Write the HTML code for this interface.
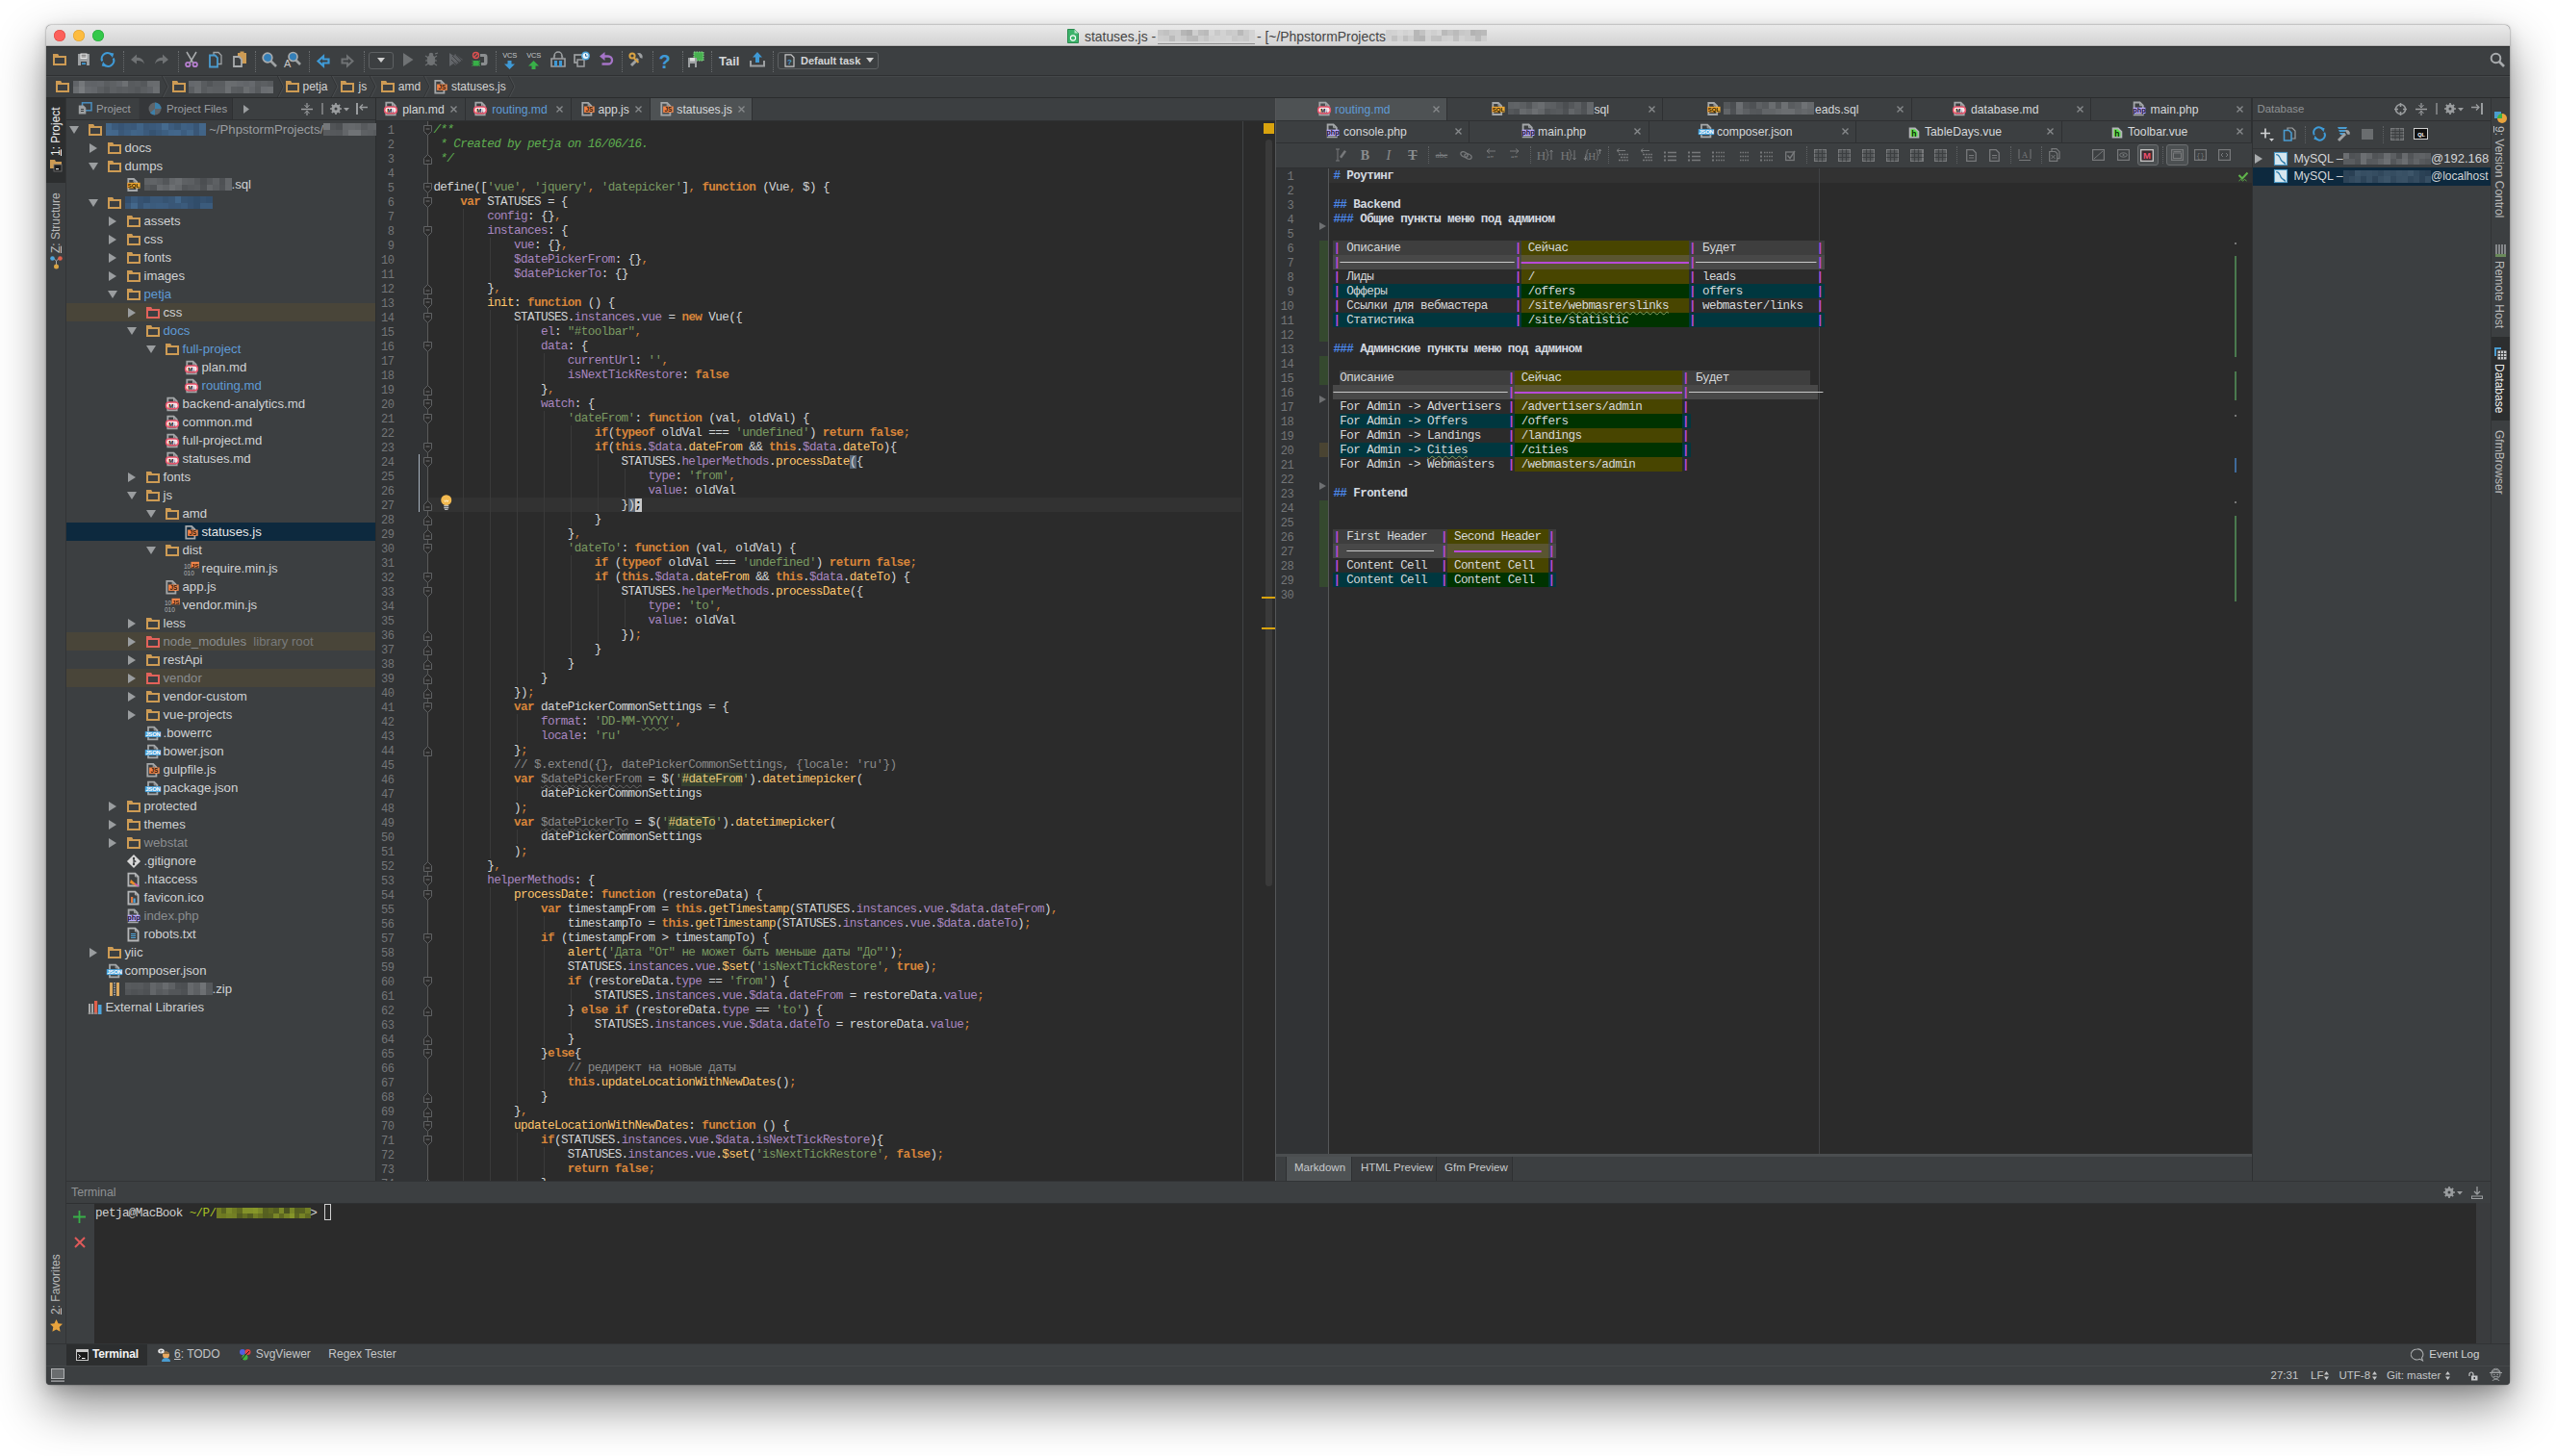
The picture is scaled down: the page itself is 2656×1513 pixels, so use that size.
<!DOCTYPE html><html><head><meta charset="utf-8"><title>statuses.js</title><style>
html,body{margin:0;padding:0;background:#fff}
body{width:2656px;height:1513px;position:relative;overflow:hidden;font-family:"Liberation Sans",sans-serif}
#win{position:absolute;left:48px;top:25.5px;width:2560px;height:1413px;background:#3c3f41;border-radius:5px 5px 4px 4px;overflow:hidden}
#sh{position:absolute;left:48px;top:25.5px;width:2560px;height:1413px;border-radius:5px;box-shadow:0 22px 50px 1px rgba(0,0,0,.44),0 0 2px rgba(0,0,0,.5),0 6px 16px rgba(0,0,0,.14)}
#c{position:absolute;left:-48px;top:-25.5px;width:2656px;height:1513px}
#c div,#c svg,.bl i{position:absolute}
svg{overflow:visible}
.t{white-space:pre}
.tr{height:19px;line-height:19px;font-size:13.2px;display:flex;align-items:center}
.tr span{display:inline-block}
.tb{height:13px;position:relative;display:inline-flex!important;flex-wrap:wrap;align-content:flex-start;overflow:hidden}
.tb b{display:block;width:6.5px;height:6.5px}
.code,.ln{font-family:"Liberation Mono",monospace;font-size:12.6px;letter-spacing:-.585px;line-height:15px;white-space:pre;color:#d3d5d7}
.ln{font-size:12px;letter-spacing:-.3px}
#c .code div,#c .ln div{position:static;height:15px}
.ln{color:#747678;text-align:right}
k{color:#d8853a;font-weight:bold}
o{color:#d8853a}
.code s{color:#7a9a62;text-decoration:none}
p{color:#a987c0;display:inline;margin:0}
f{color:#ffc66d}
d{color:#5faf50;font-style:italic}
c{color:#8a8a8a}
g{color:#8a8a8a;text-decoration:underline wavy #6a6a6a .5px;text-underline-offset:2px}
w{text-decoration:underline wavy #7a9a62 .5px;text-underline-offset:2px}
j{color:#e6c878;background:#35412f}
m{background:#5a6878}
u{text-decoration:underline}
.code u{background:#c8c8c8;color:#000;text-decoration:none;font-weight:bold}
.mdc{color:#d6d8da}
.mdc b{color:#d4d9e0}
h{color:#4a86e8;font-weight:bold}
q{color:#b84ad8;font-weight:bold;quotes:none}
q::before,q::after{content:none}
e{color:transparent;text-decoration:line-through #c8c8c8 1.4px}
.mdc q.dl{color:transparent;text-decoration:line-through #b84ad8 1.6px}
.mdc w{text-decoration:underline wavy #8aa060 .5px}
</style></head><body><div id="sh"></div><div id="win"><div id="c"><div style="left:48px;top:25px;width:2560px;height:23px;background:linear-gradient(#ebebeb,#d3d3d3);border-bottom:1px solid #b0b0b0;box-sizing:border-box"></div>
<div style="left:55.8px;top:31px;width:12px;height:12px;border-radius:50%;background:#fc605b;box-shadow:inset 0 0 0 .6px #de4943"></div>
<div style="left:76px;top:31px;width:12px;height:12px;border-radius:50%;background:#fdbc40;box-shadow:inset 0 0 0 .6px #dea034"></div>
<div style="left:96px;top:31px;width:12px;height:12px;border-radius:50%;background:#34c84a;box-shadow:inset 0 0 0 .6px #27a93a"></div>
<svg style="left:1109px;top:30px;" width="12" height="15" viewBox="0 0 12 15"><path d="M.5.5h7l4 4v10H.5z" fill="#3db36b" stroke="#2a8a4e"/><path d="M7.5.5v4h4" fill="#bfe6cd"/><circle cx="6" cy="9.5" r="2.6" fill="none" stroke="#fff" stroke-width="1.1"/></svg>
<div class="t" style="left:1127px;top:28.8px;height:18px;line-height:18px;font-size:13.9px;color:#454545;">statuses.js -</div>
<div class="bl" style="left:1203px;top:31px;width:101px;height:12px"><i style="left:0.00px;top:0.00px;width:6.24px;height:6.30px;background:#c6c6c6"></i><i style="left:5.94px;top:0.00px;width:6.24px;height:6.30px;background:#c1c1c1"></i><i style="left:11.88px;top:0.00px;width:6.24px;height:6.30px;background:#cacaca"></i><i style="left:17.82px;top:0.00px;width:6.24px;height:6.30px;background:#cccccc"></i><i style="left:23.76px;top:0.00px;width:6.24px;height:6.30px;background:#b6b6b6"></i><i style="left:29.71px;top:0.00px;width:6.24px;height:6.30px;background:#afafaf"></i><i style="left:35.65px;top:0.00px;width:6.24px;height:6.30px;background:#cecece"></i><i style="left:41.59px;top:0.00px;width:6.24px;height:6.30px;background:#bebebe"></i><i style="left:47.53px;top:0.00px;width:6.24px;height:6.30px;background:#bababa"></i><i style="left:53.47px;top:0.00px;width:6.24px;height:6.30px;background:#d5d5d5"></i><i style="left:59.41px;top:0.00px;width:6.24px;height:6.30px;background:#c9c9c9"></i><i style="left:65.35px;top:0.00px;width:6.24px;height:6.30px;background:#d2d2d2"></i><i style="left:71.29px;top:0.00px;width:6.24px;height:6.30px;background:#c9c9c9"></i><i style="left:77.24px;top:0.00px;width:6.24px;height:6.30px;background:#cccccc"></i><i style="left:83.18px;top:0.00px;width:6.24px;height:6.30px;background:#b9b9b9"></i><i style="left:89.12px;top:0.00px;width:6.24px;height:6.30px;background:#cacaca"></i><i style="left:95.06px;top:0.00px;width:6.24px;height:6.30px;background:#d3d3d3"></i><i style="left:0.00px;top:6.00px;width:6.24px;height:6.30px;background:#cdcdcd"></i><i style="left:5.94px;top:6.00px;width:6.24px;height:6.30px;background:#cbcbcb"></i><i style="left:11.88px;top:6.00px;width:6.24px;height:6.30px;background:#bbbbbb"></i><i style="left:17.82px;top:6.00px;width:6.24px;height:6.30px;background:#cdcdcd"></i><i style="left:23.76px;top:6.00px;width:6.24px;height:6.30px;background:#c7c7c7"></i><i style="left:29.71px;top:6.00px;width:6.24px;height:6.30px;background:#bbbbbb"></i><i style="left:35.65px;top:6.00px;width:6.24px;height:6.30px;background:#b9b9b9"></i><i style="left:41.59px;top:6.00px;width:6.24px;height:6.30px;background:#cccccc"></i><i style="left:47.53px;top:6.00px;width:6.24px;height:6.30px;background:#c5c5c5"></i><i style="left:53.47px;top:6.00px;width:6.24px;height:6.30px;background:#d0d0d0"></i><i style="left:59.41px;top:6.00px;width:6.24px;height:6.30px;background:#d2d2d2"></i><i style="left:65.35px;top:6.00px;width:6.24px;height:6.30px;background:#d1d1d1"></i><i style="left:71.29px;top:6.00px;width:6.24px;height:6.30px;background:#d3d3d3"></i><i style="left:77.24px;top:6.00px;width:6.24px;height:6.30px;background:#c8c8c8"></i><i style="left:83.18px;top:6.00px;width:6.24px;height:6.30px;background:#cccccc"></i><i style="left:89.12px;top:6.00px;width:6.24px;height:6.30px;background:#c8c8c8"></i><i style="left:95.06px;top:6.00px;width:6.24px;height:6.30px;background:#d4d4d4"></i></div>
<div style="left:1203px;top:45px;width:101px;height:1px;background:#8a8a8a;"></div>
<div class="t" style="left:1306px;top:28.8px;height:18px;line-height:18px;font-size:13.9px;color:#454545;">- [~/PhpstormProjects</div>
<div class="bl" style="left:1440px;top:31px;width:105px;height:12px"><i style="left:0.00px;top:0.00px;width:6.13px;height:6.30px;background:#d0d0d0"></i><i style="left:5.83px;top:0.00px;width:6.13px;height:6.30px;background:#d2d2d2"></i><i style="left:11.67px;top:0.00px;width:6.13px;height:6.30px;background:#d7d7d7"></i><i style="left:17.50px;top:0.00px;width:6.13px;height:6.30px;background:#d2d2d2"></i><i style="left:23.33px;top:0.00px;width:6.13px;height:6.30px;background:#d6d6d6"></i><i style="left:29.17px;top:0.00px;width:6.13px;height:6.30px;background:#b7b7b7"></i><i style="left:35.00px;top:0.00px;width:6.13px;height:6.30px;background:#c2c2c2"></i><i style="left:40.83px;top:0.00px;width:6.13px;height:6.30px;background:#d4d4d4"></i><i style="left:46.67px;top:0.00px;width:6.13px;height:6.30px;background:#cfcfcf"></i><i style="left:52.50px;top:0.00px;width:6.13px;height:6.30px;background:#d5d5d5"></i><i style="left:58.33px;top:0.00px;width:6.13px;height:6.30px;background:#bababa"></i><i style="left:64.17px;top:0.00px;width:6.13px;height:6.30px;background:#c3c3c3"></i><i style="left:70.00px;top:0.00px;width:6.13px;height:6.30px;background:#bbbbbb"></i><i style="left:75.83px;top:0.00px;width:6.13px;height:6.30px;background:#c7c7c7"></i><i style="left:81.67px;top:0.00px;width:6.13px;height:6.30px;background:#cacaca"></i><i style="left:87.50px;top:0.00px;width:6.13px;height:6.30px;background:#b3b3b3"></i><i style="left:93.33px;top:0.00px;width:6.13px;height:6.30px;background:#b7b7b7"></i><i style="left:99.17px;top:0.00px;width:6.13px;height:6.30px;background:#bababa"></i><i style="left:0.00px;top:6.00px;width:6.13px;height:6.30px;background:#d2d2d2"></i><i style="left:5.83px;top:6.00px;width:6.13px;height:6.30px;background:#c2c2c2"></i><i style="left:11.67px;top:6.00px;width:6.13px;height:6.30px;background:#d1d1d1"></i><i style="left:17.50px;top:6.00px;width:6.13px;height:6.30px;background:#c0c0c0"></i><i style="left:23.33px;top:6.00px;width:6.13px;height:6.30px;background:#cccccc"></i><i style="left:29.17px;top:6.00px;width:6.13px;height:6.30px;background:#b7b7b7"></i><i style="left:35.00px;top:6.00px;width:6.13px;height:6.30px;background:#b4b4b4"></i><i style="left:40.83px;top:6.00px;width:6.13px;height:6.30px;background:#d1d1d1"></i><i style="left:46.67px;top:6.00px;width:6.13px;height:6.30px;background:#c2c2c2"></i><i style="left:52.50px;top:6.00px;width:6.13px;height:6.30px;background:#c1c1c1"></i><i style="left:58.33px;top:6.00px;width:6.13px;height:6.30px;background:#cfcfcf"></i><i style="left:64.17px;top:6.00px;width:6.13px;height:6.30px;background:#d1d1d1"></i><i style="left:70.00px;top:6.00px;width:6.13px;height:6.30px;background:#c0c0c0"></i><i style="left:75.83px;top:6.00px;width:6.13px;height:6.30px;background:#d1d1d1"></i><i style="left:81.67px;top:6.00px;width:6.13px;height:6.30px;background:#cbcbcb"></i><i style="left:87.50px;top:6.00px;width:6.13px;height:6.30px;background:#c9c9c9"></i><i style="left:93.33px;top:6.00px;width:6.13px;height:6.30px;background:#bababa"></i><i style="left:99.17px;top:6.00px;width:6.13px;height:6.30px;background:#cecece"></i></div>
<div style="left:48px;top:48px;width:2560px;height:30.5px;background:#3c3f41;"></div>
<div style="left:48px;top:48px;width:2560px;height:1px;background:#2a2c2d;"></div>
<div style="left:48px;top:78px;width:2560px;height:1px;background:#2e3032;"></div>
<div style="left:48px;top:79px;width:2560px;height:1px;background:#45484a;"></div>
<svg style="left:53.8px;top:54.2px;" width="16" height="16" viewBox="0 0 16 16"><path d="M1 2h5.2l1 2H15v10H1z" fill="#cd9b54"/><rect x="3" y="6" width="10" height="6" fill="#3c3f41"/></svg>
<svg style="left:78.8px;top:54.2px;" width="16" height="16" viewBox="0 0 16 16"><path d="M2 2h12v12H2z" fill="#9da0a2"/><rect x="4.5" y="1.5" width="7" height="5.5" fill="#e8e8e8"/><path d="M5.5 3.2h5M5.5 5h5" stroke="#555" stroke-width=".9"/><rect x="5" y="10" width="6" height="4" fill="#3c3f41"/><rect x="6" y="11.3" width="4" height="1.7" fill="#3f9ad6"/></svg>
<svg style="left:102.8px;top:53.2px;" width="18" height="18" viewBox="0 0 18 18"><path d="M13.5 4.5A6 6 0 0 0 3.2 10.5" fill="none" stroke="#3f9ad6" stroke-width="2.2"/><path d="M4.5 13.5A6 6 0 0 0 14.8 7.5" fill="none" stroke="#3f9ad6" stroke-width="2.2"/><path d="M10.5 1.5l4.8 1-1.4 4.5z" fill="#3f9ad6"/><path d="M7.5 16.5l-4.8-1 1.4-4.5z" fill="#3f9ad6"/></svg>
<div style="left:128.3px;top:53px;width:0;height:22px;border-left:1px dotted #6a6d6f"></div>
<svg style="left:134.9px;top:54.2px;" width="16" height="16" viewBox="0 0 16 16"><path d="M1 8l6-5.5v3.3c4 0 7 1.5 8 6.7-2-3-4.5-3.7-8-3.5v3.5z" fill="#6f7274"/></svg>
<svg style="left:159.9px;top:54.2px;" width="16" height="16" viewBox="0 0 16 16"><path d="M15 8L9 2.5v3.3c-4 0-7 1.5-8 6.7 2-3 4.500-3.700 8-3.500v3.500z" fill="#6f7274"/></svg>
<div style="left:184.6px;top:53px;width:0;height:22px;border-left:1px dotted #6a6d6f"></div>
<svg style="left:190.6px;top:53.2px;" width="16" height="18" viewBox="0 0 16 18"><path d="M3 1l6.5 11M13 1L6.500 12" stroke="#a8abad" stroke-width="1.5" fill="none"/><circle cx="4.300" cy="14" r="2.200" fill="none" stroke="#b77fd0" stroke-width="1.800"/><circle cx="11.700" cy="14" r="2.200" fill="none" stroke="#b77fd0" stroke-width="1.800"/></svg>
<svg style="left:215.6px;top:53.2px;" width="16" height="18" viewBox="0 0 16 18"><path d="M6 1.5h5l3 3v9H6z" fill="#3c3f41" stroke="#9da0a2" stroke-width="1.3"/><path d="M2 4.500h5.500l2.500 2.500v9.500H2z" fill="#3c3f41" stroke="#4a9cd0" stroke-width="1.800"/></svg>
<svg style="left:240.6px;top:53.2px;" width="16" height="18" viewBox="0 0 16 18"><path d="M6 2h9v11H6z" fill="#cd9b54"/><rect x="8.500" y=".5" width="4" height="2.500" fill="#cd9b54"/><path d="M2 6h5.500l2.500 2.500V16H2z" fill="#3c3f41" stroke="#a8abad" stroke-width="1.800"/></svg>
<div style="left:265px;top:53px;width:0;height:22px;border-left:1px dotted #6a6d6f"></div>
<svg style="left:270.7px;top:53.2px;" width="18" height="18" viewBox="0 0 18 18"><path d="M10.500 10.500l5.500 5.500" stroke="#9da0a2" stroke-width="2.600"/><circle cx="7" cy="7" r="4.800" fill="#347fb8" stroke="#a8abad" stroke-width="1.700"/></svg>
<svg style="left:295.4px;top:53.2px;" width="18" height="18" viewBox="0 0 18 18"><path d="M12.500 9.500l4.500 4.500" stroke="#9da0a2" stroke-width="2.600"/><circle cx="9.500" cy="6" r="4.500" fill="#347fb8" stroke="#a8abad" stroke-width="1.700"/><text x="0" y="17" font-family="Liberation Sans,sans-serif" font-size="11" fill="#c8c8c8">A</text></svg>
<div style="left:321.4px;top:53px;width:0;height:22px;border-left:1px dotted #6a6d6f"></div>
<svg style="left:328.7px;top:56.5px;" width="14" height="13" viewBox="0 0 14 13"><path d="M1.500 6.500l5.500-5v3h5.500v4H7v3z" fill="none" stroke="#3f9ad6" stroke-width="2.200" stroke-linejoin="miter"/></svg>
<svg style="left:353.7px;top:56.5px;" width="14" height="13" viewBox="0 0 14 13"><path d="M12.500 6.500L7 1.500v3H1.500v4H7v3z" fill="none" stroke="#6f7274" stroke-width="2"/></svg>
<div style="left:377.7px;top:53px;width:0;height:22px;border-left:1px dotted #6a6d6f"></div>
<div style="left:382.7px;top:53.5px;width:26.5px;height:18px;border:1px solid #5e6163;border-radius:3px;box-sizing:border-box"></div>
<svg style="left:392px;top:60px;" width="8" height="5" viewBox="0 0 8 5"><path d="M0 0h8L4 5z" fill="#d0d0d0"/></svg>
<svg style="left:416.9px;top:54.2px;" width="14" height="16" viewBox="0 0 14 16"><path d="M2 1l10.500 7L2 15z" fill="#6f7274"/></svg>
<svg style="left:440.6px;top:54.2px;" width="16" height="16" viewBox="0 0 16 16"><ellipse cx="7" cy="8.500" rx="4.300" ry="5.500" fill="#6f7274"/><circle cx="7" cy="3" r="2.300" fill="#6f7274"/><path d="M1 4l3 2M1 9h3M1 14l3-2M13 4l-3 2M13 9h-3M13 14l-3-2M11 2l3-1" stroke="#6f7274" stroke-width="1.200"/></svg>
<svg style="left:465.9px;top:54.2px;" width="16" height="16" viewBox="0 0 16 16"><path d="M1 1l10 7L1 15z" fill="#63666a"/><path d="M7 2l8 6-8 6-5-6z" fill="#63666a" opacity=".75"/><path d="M4 4l8 8M8 3l6 6M3 8l6 6" stroke="#3c3f41" stroke-width="1"/></svg>
<svg style="left:489.6px;top:53.2px;" width="18" height="18" viewBox="0 0 18 18"><path d="M9 3h4.500a3 3 0 0 1 3 3v6a3 3 0 0 1-3 3H10v-3h3V6H9z" fill="#8b8e90"/><circle cx="4.500" cy="4.500" r="3" fill="none" stroke="#e05050" stroke-width="1.400"/><path d="M2.500 6.500l4-4" stroke="#e05050" stroke-width="1.300"/><rect x="2" y="10" width="5.500" height="5.500" fill="#38b048"/><path d="M.5 10l2 1.500M.5 15.500l2-1.500M9 10l-2 1.500M9 15.500l-2-1.500M.3 12.800h9" stroke="#38b048" stroke-width="1"/></svg>
<div style="left:515.4px;top:53px;width:0;height:22px;border-left:1px dotted #6a6d6f"></div>
<div class="t" style="left:522.2px;top:53px;font-size:7.5px;line-height:9px;color:#c4c7c9;letter-spacing:-.2px;width:15px;text-align:center">VCS</div>
<svg style="left:524.2px;top:63px;" width="11" height="9" viewBox="0 0 11 9"><path d="M5.500 9L11 3.500H7.500V0h-4v3.500H0z" fill="#3f9ad6"/></svg>
<div class="t" style="left:547.2px;top:53px;font-size:7.5px;line-height:9px;color:#c4c7c9;letter-spacing:-.2px;width:15px;text-align:center">VCS</div>
<svg style="left:549.2px;top:63px;" width="11" height="9" viewBox="0 0 11 9"><path d="M5.500 0L11 5.500H7.500V9h-4V5.500H0z" fill="#38b048"/></svg>
<svg style="left:570.7px;top:53.2px;" width="18" height="18" viewBox="0 0 18 18"><path d="M2 8h14v8H2z" fill="none" stroke="#9da0a2" stroke-width="1.600"/><path d="M5 8V5a4 4 0 0 1 8 0v3" fill="none" stroke="#9da0a2" stroke-width="1.500"/><path d="M5 10h3v6H5zM10 10h3v6h-3z" fill="#3f9ad6"/><path d="M6 4l-2 2.500M12 4l2 2.500" stroke="#9da0a2"/></svg>
<svg style="left:596px;top:53.2px;" width="18" height="18" viewBox="0 0 18 18"><rect x="1" y="4" width="9" height="8" fill="none" stroke="#9da0a2" stroke-width="1.700"/><rect x="4" y="9" width="7" height="7" fill="#3c3f41" stroke="#9da0a2" stroke-width="1.500"/><circle cx="12.500" cy="5" r="4.500" fill="#4ea5dc"/><circle cx="12.500" cy="5" r="3" fill="#e8f2fa"/><path d="M12.500 3v2.200h2" stroke="#2a6c9c" stroke-width="1" fill="none"/></svg>
<svg style="left:621.7px;top:54.2px;" width="16" height="16" viewBox="0 0 16 16"><path d="M5 4.500h5a4 4 0 0 1 0 8H3.500" fill="none" stroke="#a574c8" stroke-width="2.300"/><path d="M6.500 0v9L1 4.500z" fill="#a574c8"/></svg>
<div style="left:646.4px;top:53px;width:0;height:22px;border-left:1px dotted #6a6d6f"></div>
<svg style="left:652px;top:53.2px;" width="18" height="18" viewBox="0 0 18 18"><path d="M4 15l7-7" stroke="#9da0a2" stroke-width="3"/><path d="M10 2.500a4 4 0 0 1 5.500 5.200l-2.500-.7-1-2.500z" fill="#9da0a2"/><circle cx="5" cy="5" r="2.600" fill="none" stroke="#d9a343" stroke-width="2"/><path d="M6.500 7l5 5" stroke="#d9a343" stroke-width="2"/></svg>
<div style="left:677.7px;top:53px;width:0;height:22px;border-left:1px dotted #6a6d6f"></div>
<div class="t" style="left:684.5px;top:52.5px;height:22px;line-height:22px;font-size:20px;color:#3f9ad6;font-weight:bold;">?</div>
<div style="left:708.7px;top:53px;width:0;height:22px;border-left:1px dotted #6a6d6f"></div>
<svg style="left:714.2px;top:53.2px;" width="18" height="18" viewBox="0 0 18 18"><rect x="7" y="1" width="10" height="9" fill="#48b050"/><path d="M7 1h10v9H7z" fill="none" stroke="#8fd694" stroke-width="1" stroke-dasharray="1.500 1"/><path d="M1 7h9v10H1z" fill="#9da0a2"/><rect x="3" y="7" width="5" height="3.500" fill="#dcdcdc"/><rect x="3" y="13" width="5" height="4" fill="#3c3f41"/></svg>
<div style="left:739.2px;top:53px;width:0;height:22px;border-left:1px dotted #6a6d6f"></div>
<div class="t" style="left:747px;top:54.5px;height:18px;line-height:18px;font-size:13px;color:#d4d6d8;font-weight:bold;">Tail</div>
<svg style="left:779px;top:54.2px;" width="16" height="16" viewBox="0 0 16 16"><path d="M1 9v5.500h14V9" fill="none" stroke="#9da0a2" stroke-width="2"/><path d="M8 0l5 5.500h-3V11H6V5.500H3z" fill="#3f9ad6"/></svg>
<div style="left:803.3px;top:53px;width:0;height:22px;border-left:1px dotted #6a6d6f"></div>
<div style="left:808.4px;top:53.5px;width:104.3px;height:18px;border:1px solid #5e6163;border-radius:3px;box-sizing:border-box"></div>
<svg style="left:814.5px;top:55.5px;" width="11" height="14" viewBox="0 0 11 14"><path d="M1 .8h6l3 3v9.400H1z" fill="none" stroke="#c8c8c8" stroke-width="1.200"/><text x="5.500" y="10.500" text-anchor="middle" font-size="8" font-family="Liberation Sans,sans-serif" fill="#4ea5dc" font-weight="bold">?</text></svg>
<div class="t" style="left:832px;top:54.3px;height:18px;line-height:18px;font-size:11px;color:#d4d6d8;font-weight:bold;">Default task</div>
<svg style="left:899.5px;top:60px;" width="8" height="5" viewBox="0 0 8 5"><path d="M0 0h8L4 5z" fill="#d0d0d0"/></svg>
<svg style="left:2587px;top:53.5px;" width="16" height="16" viewBox="0 0 16 16"><circle cx="6.500" cy="6.500" r="4.800" fill="none" stroke="#a8abad" stroke-width="2"/><path d="M10 10l5 5" stroke="#a8abad" stroke-width="2.600"/></svg>
<div style="left:48px;top:80px;width:2560px;height:21px;background:#3c3f41;"></div>
<div style="left:48px;top:100.5px;width:2560px;height:1px;background:#2e3032;"></div>
<svg style="left:56.5px;top:82px;" width="16" height="16" viewBox="0 0 16 16"><path d="M1 2h5.2l1 2H15v10H1z" fill="#cd9b54"/><rect x="3" y="6" width="10" height="6" fill="#3c3f41"/></svg>
<div class="bl" style="left:75.5px;top:83.5px;width:90px;height:13px"><i style="left:0.00px;top:0.00px;width:6.73px;height:6.80px;background:#616468"></i><i style="left:6.43px;top:0.00px;width:6.73px;height:6.80px;background:#74777a"></i><i style="left:12.86px;top:0.00px;width:6.73px;height:6.80px;background:#616468"></i><i style="left:19.29px;top:0.00px;width:6.73px;height:6.80px;background:#606367"></i><i style="left:25.71px;top:0.00px;width:6.73px;height:6.80px;background:#626569"></i><i style="left:32.14px;top:0.00px;width:6.73px;height:6.80px;background:#5a5d60"></i><i style="left:38.57px;top:0.00px;width:6.73px;height:6.80px;background:#5e6164"></i><i style="left:45.00px;top:0.00px;width:6.73px;height:6.80px;background:#63666a"></i><i style="left:51.43px;top:0.00px;width:6.73px;height:6.80px;background:#6d7073"></i><i style="left:57.86px;top:0.00px;width:6.73px;height:6.80px;background:#585b5e"></i><i style="left:64.29px;top:0.00px;width:6.73px;height:6.80px;background:#5a5d60"></i><i style="left:70.71px;top:0.00px;width:6.73px;height:6.80px;background:#55585b"></i><i style="left:77.14px;top:0.00px;width:6.73px;height:6.80px;background:#686b6e"></i><i style="left:83.57px;top:0.00px;width:6.73px;height:6.80px;background:#696c6f"></i><i style="left:0.00px;top:6.50px;width:6.73px;height:6.80px;background:#6b6e71"></i><i style="left:6.43px;top:6.50px;width:6.73px;height:6.80px;background:#797c7f"></i><i style="left:12.86px;top:6.50px;width:6.73px;height:6.80px;background:#676a6e"></i><i style="left:19.29px;top:6.50px;width:6.73px;height:6.80px;background:#64676b"></i><i style="left:25.71px;top:6.50px;width:6.73px;height:6.80px;background:#5b5e61"></i><i style="left:32.14px;top:6.50px;width:6.73px;height:6.80px;background:#54575a"></i><i style="left:38.57px;top:6.50px;width:6.73px;height:6.80px;background:#5d6063"></i><i style="left:45.00px;top:6.50px;width:6.73px;height:6.80px;background:#595c5f"></i><i style="left:51.43px;top:6.50px;width:6.73px;height:6.80px;background:#5b5e61"></i><i style="left:57.86px;top:6.50px;width:6.73px;height:6.80px;background:#585b5e"></i><i style="left:64.29px;top:6.50px;width:6.73px;height:6.80px;background:#54575a"></i><i style="left:70.71px;top:6.50px;width:6.73px;height:6.80px;background:#5b5e61"></i><i style="left:77.14px;top:6.50px;width:6.73px;height:6.80px;background:#5f6266"></i><i style="left:83.57px;top:6.50px;width:6.73px;height:6.80px;background:#6c6f72"></i></div>
<svg style="left:168.2px;top:79px;" width="7" height="22" viewBox="0 0 7 22"><path d="M.5 0l5.500 11L.5 22" fill="none" stroke="#2f3133" stroke-width="1"/><path d="M1.500 0l5.500 11-5.500 11" fill="none" stroke="#4b4e50" stroke-width="1"/></svg>
<svg style="left:178px;top:82px;" width="16" height="16" viewBox="0 0 16 16"><path d="M1 2h5.2l1 2H15v10H1z" fill="#cd9b54"/><rect x="3" y="6" width="10" height="6" fill="#3c3f41"/></svg>
<div class="bl" style="left:196px;top:83.5px;width:88px;height:13px"><i style="left:0.00px;top:0.00px;width:6.59px;height:6.80px;background:#65686c"></i><i style="left:6.29px;top:0.00px;width:6.59px;height:6.80px;background:#676a6d"></i><i style="left:12.57px;top:0.00px;width:6.59px;height:6.80px;background:#595c5f"></i><i style="left:18.86px;top:0.00px;width:6.59px;height:6.80px;background:#525558"></i><i style="left:25.14px;top:0.00px;width:6.59px;height:6.80px;background:#5a5d60"></i><i style="left:31.43px;top:0.00px;width:6.59px;height:6.80px;background:#5a5d60"></i><i style="left:37.71px;top:0.00px;width:6.59px;height:6.80px;background:#6a6d70"></i><i style="left:44.00px;top:0.00px;width:6.59px;height:6.80px;background:#696c6f"></i><i style="left:50.29px;top:0.00px;width:6.59px;height:6.80px;background:#65686c"></i><i style="left:56.57px;top:0.00px;width:6.59px;height:6.80px;background:#626569"></i><i style="left:62.86px;top:0.00px;width:6.59px;height:6.80px;background:#66696d"></i><i style="left:69.14px;top:0.00px;width:6.59px;height:6.80px;background:#595c5f"></i><i style="left:75.43px;top:0.00px;width:6.59px;height:6.80px;background:#5c5f62"></i><i style="left:81.71px;top:0.00px;width:6.59px;height:6.80px;background:#585b5e"></i><i style="left:0.00px;top:6.50px;width:6.59px;height:6.80px;background:#5b5e61"></i><i style="left:6.29px;top:6.50px;width:6.59px;height:6.80px;background:#696c6f"></i><i style="left:12.57px;top:6.50px;width:6.59px;height:6.80px;background:#585b5e"></i><i style="left:18.86px;top:6.50px;width:6.59px;height:6.80px;background:#5e6164"></i><i style="left:25.14px;top:6.50px;width:6.59px;height:6.80px;background:#5c5f62"></i><i style="left:31.43px;top:6.50px;width:6.59px;height:6.80px;background:#5c5f62"></i><i style="left:37.71px;top:6.50px;width:6.59px;height:6.80px;background:#6c6f72"></i><i style="left:44.00px;top:6.50px;width:6.59px;height:6.80px;background:#5a5d60"></i><i style="left:50.29px;top:6.50px;width:6.59px;height:6.80px;background:#585b5e"></i><i style="left:56.57px;top:6.50px;width:6.59px;height:6.80px;background:#6a6d70"></i><i style="left:62.86px;top:6.50px;width:6.59px;height:6.80px;background:#626569"></i><i style="left:69.14px;top:6.50px;width:6.59px;height:6.80px;background:#575a5d"></i><i style="left:75.43px;top:6.50px;width:6.59px;height:6.80px;background:#6a6d71"></i><i style="left:81.71px;top:6.50px;width:6.59px;height:6.80px;background:#6c6f72"></i></div>
<svg style="left:287.5px;top:79px;" width="7" height="22" viewBox="0 0 7 22"><path d="M.5 0l5.500 11L.5 22" fill="none" stroke="#2f3133" stroke-width="1"/><path d="M1.500 0l5.500 11-5.500 11" fill="none" stroke="#4b4e50" stroke-width="1"/></svg>
<svg style="left:295.6px;top:82px;" width="16" height="16" viewBox="0 0 16 16"><path d="M1 2h5.2l1 2H15v10H1z" fill="#cd9b54"/><rect x="3" y="6" width="10" height="6" fill="#3c3f41"/></svg>
<div class="t" style="left:314.5px;top:82px;height:16px;line-height:16px;font-size:12px;color:#d4d4d4;">petja</div>
<svg style="left:344px;top:79px;" width="7" height="22" viewBox="0 0 7 22"><path d="M.5 0l5.500 11L.5 22" fill="none" stroke="#2f3133" stroke-width="1"/><path d="M1.500 0l5.500 11-5.500 11" fill="none" stroke="#4b4e50" stroke-width="1"/></svg>
<svg style="left:353px;top:82px;" width="16" height="16" viewBox="0 0 16 16"><path d="M1 2h5.2l1 2H15v10H1z" fill="#cd9b54"/><rect x="3" y="6" width="10" height="6" fill="#3c3f41"/></svg>
<div class="t" style="left:372.5px;top:82px;height:16px;line-height:16px;font-size:12px;color:#d4d4d4;">js</div>
<svg style="left:383.5px;top:79px;" width="7" height="22" viewBox="0 0 7 22"><path d="M.5 0l5.500 11L.5 22" fill="none" stroke="#2f3133" stroke-width="1"/><path d="M1.500 0l5.500 11-5.500 11" fill="none" stroke="#4b4e50" stroke-width="1"/></svg>
<svg style="left:394.5px;top:82px;" width="16" height="16" viewBox="0 0 16 16"><path d="M1 2h5.2l1 2H15v10H1z" fill="#cd9b54"/><rect x="3" y="6" width="10" height="6" fill="#3c3f41"/></svg>
<div class="t" style="left:413.8px;top:82px;height:16px;line-height:16px;font-size:12px;color:#d4d4d4;">amd</div>
<svg style="left:439.5px;top:79px;" width="7" height="22" viewBox="0 0 7 22"><path d="M.5 0l5.500 11L.5 22" fill="none" stroke="#2f3133" stroke-width="1"/><path d="M1.500 0l5.500 11-5.500 11" fill="none" stroke="#4b4e50" stroke-width="1"/></svg>
<svg style="left:450px;top:82px;" width="16" height="16" viewBox="0 0 16 16"><path d="M2.3 1.8h5.900000000000001l3.2 3.2v9.599999999999998h-9.100000000000001z" fill="none" stroke="#a4a7a9" stroke-width="1.8" stroke-linejoin="miter"/><path d="M8.2 1.8v3.2h3.2" fill="none" stroke="#a4a7a9" stroke-width="1"/><rect x="4.1" y="5.5" width="10.6" height="6.4" fill="#f0854a"/><text x="9.399999999999999" y="11.1" text-anchor="middle" font-family="Liberation Sans,sans-serif" font-weight="bold" font-size="6.4" fill="#30180a" letter-spacing="0">JS</text></svg>
<div class="t" style="left:469px;top:82px;height:16px;line-height:16px;font-size:12px;color:#d4d4d4;">statuses.js</div>
<svg style="left:528.1px;top:79px;" width="7" height="22" viewBox="0 0 7 22"><path d="M.5 0l5.500 11L.5 22" fill="none" stroke="#2f3133" stroke-width="1"/><path d="M1.500 0l5.500 11-5.500 11" fill="none" stroke="#4b4e50" stroke-width="1"/></svg>
<div style="left:48px;top:101px;width:20px;height:1295px;background:#3c3f41;"></div>
<div style="left:67.5px;top:101px;width:1px;height:1295px;background:#323436;"></div>
<div style="left:48px;top:101px;width:19.5px;height:88.5px;background:#2c2e2f;"></div>
<div class="t" style="left:58px;top:162px;height:16px;line-height:16px;font-size:12px;color:#f0f0f0;transform-origin:0 0;transform:rotate(-90deg) translate(0,-8px)"><u>1</u>: Project</div>
<svg style="left:51.5px;top:165px;" width="13" height="14" viewBox="0 0 13 14"><path d="M0 1h5l1 2h6v7H0z" fill="#cd9b54"/><rect x="4" y="6" width="8" height="7" fill="#1e1e1e" stroke="#777" stroke-width=".8"/><rect x="6" y="10" width="3" height="1.200" fill="#ddd"/></svg>
<div class="t" style="left:58px;top:263px;height:16px;line-height:16px;font-size:12px;color:#bbbbbb;transform-origin:0 0;transform:rotate(-90deg) translate(0,-8px)"><u>Z</u>: Structure</div>
<svg style="left:51.5px;top:266px;" width="13" height="14" viewBox="0 0 13 14"><path d="M6.500 9V5M3 2l3.500 3L10 2" stroke="#aaa" fill="none"/><circle cx="2.500" cy="2.500" r="2.300" fill="#4ea5dc"/><circle cx="10.500" cy="2.500" r="2.300" fill="#e0604c"/><circle cx="6.500" cy="11" r="2.500" fill="#d9a343"/></svg>
<div class="t" style="left:58px;top:1366px;height:16px;line-height:16px;font-size:12px;color:#bbbbbb;transform-origin:0 0;transform:rotate(-90deg) translate(0,-8px)"><u>2</u>: Favorites</div>
<svg style="left:51.5px;top:1370.5px;" width="13" height="13" viewBox="0 0 13 13"><path d="M6.500 0l2 4.300 4.500.5-3.300 3.200.9 4.700-4.100-2.300-4.100 2.300.9-4.700L0 4.800l4.500-.5z" fill="#e8a33d"/></svg>
<div style="left:68.5px;top:101px;width:322px;height:1126px;background:#3c3f41;"></div>
<div style="left:390px;top:101px;width:1px;height:1126px;background:#2b2d2e;"></div>
<div style="left:68.5px;top:101px;width:321.5px;height:23px;background:#3c3f41;"></div>
<div style="left:143.7px;top:101.5px;width:98px;height:22px;background:#35373a;border-right:1px solid #2e3032;border-left:1px solid #393b3d;box-sizing:border-box"></div>
<div style="left:68.5px;top:124px;width:321.5px;height:1px;background:#2e3032;"></div>
<svg style="left:80.5px;top:106px;" width="15" height="13" viewBox="0 0 15 13"><rect x="4.500" y=".8" width="9.500" height="8" fill="none" stroke="#4a8fc0" stroke-width="1.500"/><path d="M.8 3.500h5l2.500 2.500v6.500H.8z" fill="#9da0a2"/><path d="M3 7.500h3M3 9.500h3" stroke="#3c3f41"/></svg>
<div class="t" style="left:100px;top:104.5px;height:16px;line-height:16px;font-size:11.5px;color:#9a9da0;">Project</div>
<svg style="left:154px;top:105.5px;" width="14" height="14" viewBox="0 0 14 14"><circle cx="7" cy="7" r="6.500" fill="#606366"/><path d="M7 7V.5A6.500 6.500 0 0 1 13.500 7z" fill="#3d7fa8"/><path d="M7 7l-5 4.200A6.500 6.500 0 0 0 7 13.500z" fill="#3d7fa8"/></svg>
<div class="t" style="left:173px;top:104.5px;height:16px;line-height:16px;font-size:11.5px;color:#9a9da0;">Project Files</div>
<svg style="left:253px;top:108.5px;" width="6" height="9" viewBox="0 0 6 9"><path d="M0 0l6 4.500L0 9z" fill="#9a9d9f"/></svg>
<svg style="left:313px;top:106.5px;" width="12" height="13" viewBox="0 0 12 13"><path d="M0 6.500h12" stroke="#9a9d9f" stroke-width="1.300"/><path d="M6 0v4M6 13V9" stroke="#9a9d9f" stroke-width="1.200"/><path d="M3.500 2L6 5l2.500-3M3.500 11L6 8l2.500 3" fill="none" stroke="#9a9d9f"/></svg>
<div style="left:334px;top:106.5px;width:1.5px;height:12px;background:#77797b;"></div>
<svg style="left:342.5px;top:107px;" width="12" height="12" viewBox="0 0 12 12"><circle cx="6" cy="6" r="3.300" fill="none" stroke="#9a9d9f" stroke-width="2.400"/><path d="M6 0v12M0 6h12M1.800 1.800l8.400 8.400M10.200 1.800l-8.400 8.400" stroke="#9a9d9f" stroke-width="1.700"/><circle cx="6" cy="6" r="1.500" fill="#3c3f41"/></svg>
<svg style="left:356.5px;top:111.5px;" width="6" height="4" viewBox="0 0 6 4"><path d="M0 0h6L3 3.500z" fill="#9a9d9f"/></svg>
<svg style="left:370.4px;top:107px;" width="12" height="12" viewBox="0 0 12 12"><path d="M1 0v12" stroke="#9a9d9f" stroke-width="2"/><path d="M4 4.500h8" stroke="#9a9d9f" stroke-width="1.300"/><path d="M7 1.500L4 4.500l3 3" fill="none" stroke="#9a9d9f" stroke-width="1.300"/></svg>
<svg style="left:72.1px;top:131px;" width="10" height="8" viewBox="0 0 10 8"><path d="M0 0h10L5 8z" fill="#9a9d9f"/></svg>
<svg style="left:91.2px;top:126.5px;" width="16" height="16" viewBox="0 0 16 16"><path d="M1 2h5.2l1 2H15v10H1z" fill="#cd9b54"/><rect x="3" y="6" width="10" height="6" fill="#3c3f41"/></svg>
<div class="t tr" style="left:109.5px;top:125px"><span class="tb" style="width:104px"><b style="background:#42668a"></b><b style="background:#3b5a7b"></b><b style="background:#375474"></b><b style="background:#3b5a7a"></b><b style="background:#3a5879"></b><b style="background:#406386"></b><b style="background:#395777"></b><b style="background:#3a597a"></b><b style="background:#3c5c7e"></b><b style="background:#456a8e"></b><b style="background:#3c5c7e"></b><b style="background:#385675"></b><b style="background:#3f6183"></b><b style="background:#3d5e81"></b><b style="background:#385575"></b><b style="background:#43678b"></b><b style="background:#44698d"></b><b style="background:#43678b"></b><b style="background:#3a5878"></b><b style="background:#3d5e80"></b><b style="background:#416588"></b><b style="background:#406386"></b><b style="background:#3b5a7b"></b><b style="background:#365371"></b><b style="background:#3a5979"></b><b style="background:#3d5f81"></b><b style="background:#42668a"></b><b style="background:#43678b"></b><b style="background:#3c5d7f"></b><b style="background:#426689"></b><b style="background:#395676"></b><b style="background:#416487"></b></span><span style="color:#9a9da0"> ~/PhpstormProjects/</span><span class="tb" style="width:58.5px"><b style="background:#74777a"></b><b style="background:#515457"></b><b style="background:#4c4f52"></b><b style="background:#64676a"></b><b style="background:#66696c"></b><b style="background:#636669"></b><b style="background:#575a5d"></b><b style="background:#5e6164"></b><b style="background:#606366"></b><b style="background:#585b5e"></b><b style="background:#56595c"></b><b style="background:#55585b"></b><b style="background:#636669"></b><b style="background:#707376"></b><b style="background:#707376"></b><b style="background:#5e6164"></b><b style="background:#5c5f62"></b><b style="background:#575a5d"></b></span></div>
<svg style="left:93.1px;top:148.5px;" width="8" height="10" viewBox="0 0 8 10"><path d="M0 0l8 5-8 5z" fill="#9a9d9f"/></svg>
<svg style="left:111.2px;top:145.5px;" width="16" height="16" viewBox="0 0 16 16"><path d="M1 2h5.2l1 2H15v10H1z" fill="#cd9b54"/><rect x="3" y="6" width="10" height="6" fill="#3c3f41"/></svg>
<div class="t tr" style="left:129.5px;top:144px"><span style="color:#d0d2d4">docs</span></div>
<svg style="left:92.1px;top:169px;" width="10" height="8" viewBox="0 0 10 8"><path d="M0 0h10L5 8z" fill="#9a9d9f"/></svg>
<svg style="left:111.2px;top:164.5px;" width="16" height="16" viewBox="0 0 16 16"><path d="M1 2h5.2l1 2H15v10H1z" fill="#cd9b54"/><rect x="3" y="6" width="10" height="6" fill="#3c3f41"/></svg>
<div class="t tr" style="left:129.5px;top:163px"><span style="color:#d0d2d4">dumps</span></div>
<svg style="left:131.2px;top:183.5px;" width="16" height="16" viewBox="0 0 16 16"><path d="M2.3 2h5.699999999999998l3.2 3.2v8.8h-8.899999999999999z" fill="none" stroke="#a4a7a9" stroke-width="1.8" stroke-linejoin="miter"/><path d="M7.999999999999999 2v3.2h3.2" fill="none" stroke="#a4a7a9" stroke-width="1"/><rect x="1.4" y="5.8" width="13.2" height="5.8" fill="#f0a832"/><text x="8.0" y="10.5" text-anchor="middle" font-family="Liberation Sans,sans-serif" font-weight="bold" font-size="6" fill="#2a1a00" letter-spacing="0">SQL</text></svg>
<div class="t tr" style="left:149.5px;top:182px"><span class="tb" style="width:91px"><b style="background:#5f6265"></b><b style="background:#616467"></b><b style="background:#5c5f62"></b><b style="background:#535659"></b><b style="background:#64676a"></b><b style="background:#6a6d70"></b><b style="background:#5e6164"></b><b style="background:#5c5f62"></b><b style="background:#54575a"></b><b style="background:#4b4e51"></b><b style="background:#54575a"></b><b style="background:#5d6063"></b><b style="background:#4e5154"></b><b style="background:#636669"></b><b style="background:#55585b"></b><b style="background:#505356"></b><b style="background:#676a6d"></b><b style="background:#616467"></b><b style="background:#6c6f72"></b><b style="background:#64676a"></b><b style="background:#525558"></b><b style="background:#56595c"></b><b style="background:#585b5e"></b><b style="background:#4e5154"></b><b style="background:#636669"></b><b style="background:#5a5d60"></b><b style="background:#505356"></b><b style="background:#64676a"></b></span><span style="color:#d0d2d4">.sql</span></div>
<svg style="left:92.1px;top:207px;" width="10" height="8" viewBox="0 0 10 8"><path d="M0 0h10L5 8z" fill="#9a9d9f"/></svg>
<svg style="left:111.2px;top:202.5px;" width="16" height="16" viewBox="0 0 16 16"><path d="M1 2h5.2l1 2H15v10H1z" fill="#cd9b54"/><rect x="3" y="6" width="10" height="6" fill="#3c3f41"/></svg>
<div class="t tr" style="left:129.5px;top:201px"><span class="tb" style="width:91px"><b style="background:#334e6c"></b><b style="background:#3b5b7c"></b><b style="background:#365271"></b><b style="background:#334f6d"></b><b style="background:#3a5878"></b><b style="background:#3a5878"></b><b style="background:#365371"></b><b style="background:#395776"></b><b style="background:#416588"></b><b style="background:#365371"></b><b style="background:#34516f"></b><b style="background:#314d6a"></b><b style="background:#35516f"></b><b style="background:#324e6c"></b><b style="background:#395777"></b><b style="background:#43678b"></b><b style="background:#365372"></b><b style="background:#3d5e80"></b><b style="background:#3b5b7c"></b><b style="background:#3c5d7f"></b><b style="background:#3c5c7e"></b><b style="background:#395676"></b><b style="background:#395777"></b><b style="background:#3b5b7c"></b><b style="background:#355170"></b><b style="background:#314d6a"></b><b style="background:#3b5b7c"></b><b style="background:#3b5b7c"></b></span></div>
<svg style="left:113.1px;top:224.5px;" width="8" height="10" viewBox="0 0 8 10"><path d="M0 0l8 5-8 5z" fill="#9a9d9f"/></svg>
<svg style="left:131.2px;top:221.5px;" width="16" height="16" viewBox="0 0 16 16"><path d="M1 2h5.2l1 2H15v10H1z" fill="#cd9b54"/><rect x="3" y="6" width="10" height="6" fill="#3c3f41"/></svg>
<div class="t tr" style="left:149.5px;top:220px"><span style="color:#d0d2d4">assets</span></div>
<svg style="left:113.1px;top:243.5px;" width="8" height="10" viewBox="0 0 8 10"><path d="M0 0l8 5-8 5z" fill="#9a9d9f"/></svg>
<svg style="left:131.2px;top:240.5px;" width="16" height="16" viewBox="0 0 16 16"><path d="M1 2h5.2l1 2H15v10H1z" fill="#cd9b54"/><rect x="3" y="6" width="10" height="6" fill="#3c3f41"/></svg>
<div class="t tr" style="left:149.5px;top:239px"><span style="color:#d0d2d4">css</span></div>
<svg style="left:113.1px;top:262.5px;" width="8" height="10" viewBox="0 0 8 10"><path d="M0 0l8 5-8 5z" fill="#9a9d9f"/></svg>
<svg style="left:131.2px;top:259.5px;" width="16" height="16" viewBox="0 0 16 16"><path d="M1 2h5.2l1 2H15v10H1z" fill="#cd9b54"/><rect x="3" y="6" width="10" height="6" fill="#3c3f41"/></svg>
<div class="t tr" style="left:149.5px;top:258px"><span style="color:#d0d2d4">fonts</span></div>
<svg style="left:113.1px;top:281.5px;" width="8" height="10" viewBox="0 0 8 10"><path d="M0 0l8 5-8 5z" fill="#9a9d9f"/></svg>
<svg style="left:131.2px;top:278.5px;" width="16" height="16" viewBox="0 0 16 16"><path d="M1 2h5.2l1 2H15v10H1z" fill="#cd9b54"/><rect x="3" y="6" width="10" height="6" fill="#3c3f41"/></svg>
<div class="t tr" style="left:149.5px;top:277px"><span style="color:#d0d2d4">images</span></div>
<svg style="left:112.1px;top:302px;" width="10" height="8" viewBox="0 0 10 8"><path d="M0 0h10L5 8z" fill="#9a9d9f"/></svg>
<svg style="left:131.2px;top:297.5px;" width="16" height="16" viewBox="0 0 16 16"><path d="M1 2h5.2l1 2H15v10H1z" fill="#cd9b54"/><rect x="3" y="6" width="10" height="6" fill="#3c3f41"/></svg>
<div class="t tr" style="left:149.5px;top:296px"><span style="color:#5f9bd6">petja</span></div>
<div style="left:69px;top:315px;width:321px;height:19px;background:#494539;"></div>
<svg style="left:133.1px;top:319.5px;" width="8" height="10" viewBox="0 0 8 10"><path d="M0 0l8 5-8 5z" fill="#9a9d9f"/></svg>
<svg style="left:151.2px;top:316.5px;" width="16" height="16" viewBox="0 0 16 16"><path d="M1 2h5.2l1 2H15v10H1z" fill="#e2625a"/><rect x="3" y="6" width="10" height="6" fill="#3c3f41"/></svg>
<div class="t tr" style="left:169.5px;top:315px"><span style="color:#d0d2d4">css</span></div>
<svg style="left:132.1px;top:340px;" width="10" height="8" viewBox="0 0 10 8"><path d="M0 0h10L5 8z" fill="#9a9d9f"/></svg>
<svg style="left:151.2px;top:335.5px;" width="16" height="16" viewBox="0 0 16 16"><path d="M1 2h5.2l1 2H15v10H1z" fill="#cd9b54"/><rect x="3" y="6" width="10" height="6" fill="#3c3f41"/></svg>
<div class="t tr" style="left:169.5px;top:334px"><span style="color:#5f9bd6">docs</span></div>
<svg style="left:152.1px;top:359px;" width="10" height="8" viewBox="0 0 10 8"><path d="M0 0h10L5 8z" fill="#9a9d9f"/></svg>
<svg style="left:171.2px;top:354.5px;" width="16" height="16" viewBox="0 0 16 16"><path d="M1 2h5.2l1 2H15v10H1z" fill="#cd9b54"/><rect x="3" y="6" width="10" height="6" fill="#3c3f41"/></svg>
<div class="t tr" style="left:189.5px;top:353px"><span style="color:#5f9bd6">full-project</span></div>
<svg style="left:191.2px;top:373.5px;" width="16" height="16" viewBox="0 0 16 16"><path d="M3.3 1.7h6.199999999999998l3.2 3.2v9.400000000000002h-9.399999999999999z" fill="none" stroke="#a4a7a9" stroke-width="1.8" stroke-linejoin="miter"/><path d="M9.5 1.7v3.2h3.2" fill="none" stroke="#a4a7a9" stroke-width="1"/><rect x="1.6" y="6" width="12.8" height="6.8" rx="3.2" fill="#fbe3e6" stroke="#e8566e" stroke-width="1.5"/><text x="8" y="11.6" text-anchor="middle" font-family="Liberation Sans,sans-serif" font-weight="bold" font-size="6" fill="#111" letter-spacing="-.3">M↓</text></svg>
<div class="t tr" style="left:209.5px;top:372px"><span style="color:#d0d2d4">plan.md</span></div>
<svg style="left:191.2px;top:392.5px;" width="16" height="16" viewBox="0 0 16 16"><path d="M3.3 1.7h6.199999999999998l3.2 3.2v9.400000000000002h-9.399999999999999z" fill="none" stroke="#a4a7a9" stroke-width="1.8" stroke-linejoin="miter"/><path d="M9.5 1.7v3.2h3.2" fill="none" stroke="#a4a7a9" stroke-width="1"/><rect x="1.6" y="6" width="12.8" height="6.8" rx="3.2" fill="#fbe3e6" stroke="#e8566e" stroke-width="1.5"/><text x="8" y="11.6" text-anchor="middle" font-family="Liberation Sans,sans-serif" font-weight="bold" font-size="6" fill="#111" letter-spacing="-.3">M↓</text></svg>
<div class="t tr" style="left:209.5px;top:391px"><span style="color:#5f9bd6">routing.md</span></div>
<svg style="left:171.2px;top:411.5px;" width="16" height="16" viewBox="0 0 16 16"><path d="M3.3 1.7h6.199999999999998l3.2 3.2v9.400000000000002h-9.399999999999999z" fill="none" stroke="#a4a7a9" stroke-width="1.8" stroke-linejoin="miter"/><path d="M9.5 1.7v3.2h3.2" fill="none" stroke="#a4a7a9" stroke-width="1"/><rect x="1.6" y="6" width="12.8" height="6.8" rx="3.2" fill="#fbe3e6" stroke="#e8566e" stroke-width="1.5"/><text x="8" y="11.6" text-anchor="middle" font-family="Liberation Sans,sans-serif" font-weight="bold" font-size="6" fill="#111" letter-spacing="-.3">M↓</text></svg>
<div class="t tr" style="left:189.5px;top:410px"><span style="color:#d0d2d4">backend-analytics.md</span></div>
<svg style="left:171.2px;top:430.5px;" width="16" height="16" viewBox="0 0 16 16"><path d="M3.3 1.7h6.199999999999998l3.2 3.2v9.400000000000002h-9.399999999999999z" fill="none" stroke="#a4a7a9" stroke-width="1.8" stroke-linejoin="miter"/><path d="M9.5 1.7v3.2h3.2" fill="none" stroke="#a4a7a9" stroke-width="1"/><rect x="1.6" y="6" width="12.8" height="6.8" rx="3.2" fill="#fbe3e6" stroke="#e8566e" stroke-width="1.5"/><text x="8" y="11.6" text-anchor="middle" font-family="Liberation Sans,sans-serif" font-weight="bold" font-size="6" fill="#111" letter-spacing="-.3">M↓</text></svg>
<div class="t tr" style="left:189.5px;top:429px"><span style="color:#d0d2d4">common.md</span></div>
<svg style="left:171.2px;top:449.5px;" width="16" height="16" viewBox="0 0 16 16"><path d="M3.3 1.7h6.199999999999998l3.2 3.2v9.400000000000002h-9.399999999999999z" fill="none" stroke="#a4a7a9" stroke-width="1.8" stroke-linejoin="miter"/><path d="M9.5 1.7v3.2h3.2" fill="none" stroke="#a4a7a9" stroke-width="1"/><rect x="1.6" y="6" width="12.8" height="6.8" rx="3.2" fill="#fbe3e6" stroke="#e8566e" stroke-width="1.5"/><text x="8" y="11.6" text-anchor="middle" font-family="Liberation Sans,sans-serif" font-weight="bold" font-size="6" fill="#111" letter-spacing="-.3">M↓</text></svg>
<div class="t tr" style="left:189.5px;top:448px"><span style="color:#d0d2d4">full-project.md</span></div>
<svg style="left:171.2px;top:468.5px;" width="16" height="16" viewBox="0 0 16 16"><path d="M3.3 1.7h6.199999999999998l3.2 3.2v9.400000000000002h-9.399999999999999z" fill="none" stroke="#a4a7a9" stroke-width="1.8" stroke-linejoin="miter"/><path d="M9.5 1.7v3.2h3.2" fill="none" stroke="#a4a7a9" stroke-width="1"/><rect x="1.6" y="6" width="12.8" height="6.8" rx="3.2" fill="#fbe3e6" stroke="#e8566e" stroke-width="1.5"/><text x="8" y="11.6" text-anchor="middle" font-family="Liberation Sans,sans-serif" font-weight="bold" font-size="6" fill="#111" letter-spacing="-.3">M↓</text></svg>
<div class="t tr" style="left:189.5px;top:467px"><span style="color:#d0d2d4">statuses.md</span></div>
<svg style="left:133.1px;top:490.5px;" width="8" height="10" viewBox="0 0 8 10"><path d="M0 0l8 5-8 5z" fill="#9a9d9f"/></svg>
<svg style="left:151.2px;top:487.5px;" width="16" height="16" viewBox="0 0 16 16"><path d="M1 2h5.2l1 2H15v10H1z" fill="#cd9b54"/><rect x="3" y="6" width="10" height="6" fill="#3c3f41"/></svg>
<div class="t tr" style="left:169.5px;top:486px"><span style="color:#d0d2d4">fonts</span></div>
<svg style="left:132.1px;top:511px;" width="10" height="8" viewBox="0 0 10 8"><path d="M0 0h10L5 8z" fill="#9a9d9f"/></svg>
<svg style="left:151.2px;top:506.5px;" width="16" height="16" viewBox="0 0 16 16"><path d="M1 2h5.2l1 2H15v10H1z" fill="#cd9b54"/><rect x="3" y="6" width="10" height="6" fill="#3c3f41"/></svg>
<div class="t tr" style="left:169.5px;top:505px"><span style="color:#d0d2d4">js</span></div>
<svg style="left:152.1px;top:530px;" width="10" height="8" viewBox="0 0 10 8"><path d="M0 0h10L5 8z" fill="#9a9d9f"/></svg>
<svg style="left:171.2px;top:525.5px;" width="16" height="16" viewBox="0 0 16 16"><path d="M1 2h5.2l1 2H15v10H1z" fill="#cd9b54"/><rect x="3" y="6" width="10" height="6" fill="#3c3f41"/></svg>
<div class="t tr" style="left:189.5px;top:524px"><span style="color:#d0d2d4">amd</span></div>
<div style="left:69px;top:543px;width:321px;height:19px;background:#0d293e;"></div>
<svg style="left:191.2px;top:544.5px;" width="16" height="16" viewBox="0 0 16 16"><path d="M2.3 1.8h5.900000000000001l3.2 3.2v9.599999999999998h-9.100000000000001z" fill="none" stroke="#a4a7a9" stroke-width="1.8" stroke-linejoin="miter"/><path d="M8.2 1.8v3.2h3.2" fill="none" stroke="#a4a7a9" stroke-width="1"/><rect x="4.1" y="5.5" width="10.6" height="6.4" fill="#f0854a"/><text x="9.399999999999999" y="11.1" text-anchor="middle" font-family="Liberation Sans,sans-serif" font-weight="bold" font-size="6.4" fill="#30180a" letter-spacing="0">JS</text></svg>
<div class="t tr" style="left:209.5px;top:543px"><span style="color:#e8e8e8">statuses.js</span></div>
<svg style="left:152.1px;top:568px;" width="10" height="8" viewBox="0 0 10 8"><path d="M0 0h10L5 8z" fill="#9a9d9f"/></svg>
<svg style="left:171.2px;top:563.5px;" width="16" height="16" viewBox="0 0 16 16"><path d="M1 2h5.2l1 2H15v10H1z" fill="#cd9b54"/><rect x="3" y="6" width="10" height="6" fill="#3c3f41"/></svg>
<div class="t tr" style="left:189.5px;top:562px"><span style="color:#d0d2d4">dist</span></div>
<svg style="left:191.2px;top:582.5px;" width="16" height="16" viewBox="0 0 16 16"><text x="0" y="7.500" font-family="Liberation Sans,sans-serif" font-size="6.5" fill="#b4b6b8">10</text><text x="0" y="15" font-family="Liberation Sans,sans-serif" font-size="6.5" fill="#b4b6b8">010</text><rect x="7.5" y="0.8" width="8.5" height="6.4" fill="#f0854a"/><text x="11.75" y="6.5" text-anchor="middle" font-family="Liberation Sans,sans-serif" font-weight="bold" font-size="6" fill="#30180a" letter-spacing="0">JS</text></svg>
<div class="t tr" style="left:209.5px;top:581px"><span style="color:#d0d2d4">require.min.js</span></div>
<svg style="left:171.2px;top:601.5px;" width="16" height="16" viewBox="0 0 16 16"><path d="M2.3 1.8h5.900000000000001l3.2 3.2v9.599999999999998h-9.100000000000001z" fill="none" stroke="#a4a7a9" stroke-width="1.8" stroke-linejoin="miter"/><path d="M8.2 1.8v3.2h3.2" fill="none" stroke="#a4a7a9" stroke-width="1"/><rect x="4.1" y="5.5" width="10.6" height="6.4" fill="#f0854a"/><text x="9.399999999999999" y="11.1" text-anchor="middle" font-family="Liberation Sans,sans-serif" font-weight="bold" font-size="6.4" fill="#30180a" letter-spacing="0">JS</text></svg>
<div class="t tr" style="left:189.5px;top:600px"><span style="color:#d0d2d4">app.js</span></div>
<svg style="left:171.2px;top:620.5px;" width="16" height="16" viewBox="0 0 16 16"><text x="0" y="7.500" font-family="Liberation Sans,sans-serif" font-size="6.5" fill="#b4b6b8">10</text><text x="0" y="15" font-family="Liberation Sans,sans-serif" font-size="6.5" fill="#b4b6b8">010</text><rect x="7.5" y="0.8" width="8.5" height="6.4" fill="#f0854a"/><text x="11.75" y="6.5" text-anchor="middle" font-family="Liberation Sans,sans-serif" font-weight="bold" font-size="6" fill="#30180a" letter-spacing="0">JS</text></svg>
<div class="t tr" style="left:189.5px;top:619px"><span style="color:#d0d2d4">vendor.min.js</span></div>
<svg style="left:133.1px;top:642.5px;" width="8" height="10" viewBox="0 0 8 10"><path d="M0 0l8 5-8 5z" fill="#9a9d9f"/></svg>
<svg style="left:151.2px;top:639.5px;" width="16" height="16" viewBox="0 0 16 16"><path d="M1 2h5.2l1 2H15v10H1z" fill="#cd9b54"/><rect x="3" y="6" width="10" height="6" fill="#3c3f41"/></svg>
<div class="t tr" style="left:169.5px;top:638px"><span style="color:#d0d2d4">less</span></div>
<div style="left:69px;top:657px;width:321px;height:19px;background:#494539;"></div>
<svg style="left:133.1px;top:661.5px;" width="8" height="10" viewBox="0 0 8 10"><path d="M0 0l8 5-8 5z" fill="#9a9d9f"/></svg>
<svg style="left:151.2px;top:658.5px;" width="16" height="16" viewBox="0 0 16 16"><path d="M1 2h5.2l1 2H15v10H1z" fill="#e2625a"/><rect x="3" y="6" width="10" height="6" fill="#3c3f41"/></svg>
<div class="t tr" style="left:169.5px;top:657px"><span style="color:#8a8d90">node_modules</span><span style="color:#777a7c">  library root</span></div>
<svg style="left:133.1px;top:680.5px;" width="8" height="10" viewBox="0 0 8 10"><path d="M0 0l8 5-8 5z" fill="#9a9d9f"/></svg>
<svg style="left:151.2px;top:677.5px;" width="16" height="16" viewBox="0 0 16 16"><path d="M1 2h5.2l1 2H15v10H1z" fill="#cd9b54"/><rect x="3" y="6" width="10" height="6" fill="#3c3f41"/></svg>
<div class="t tr" style="left:169.5px;top:676px"><span style="color:#d0d2d4">restApi</span></div>
<div style="left:69px;top:695px;width:321px;height:19px;background:#494539;"></div>
<svg style="left:133.1px;top:699.5px;" width="8" height="10" viewBox="0 0 8 10"><path d="M0 0l8 5-8 5z" fill="#9a9d9f"/></svg>
<svg style="left:151.2px;top:696.5px;" width="16" height="16" viewBox="0 0 16 16"><path d="M1 2h5.2l1 2H15v10H1z" fill="#e2625a"/><rect x="3" y="6" width="10" height="6" fill="#3c3f41"/></svg>
<div class="t tr" style="left:169.5px;top:695px"><span style="color:#8a8d90">vendor</span></div>
<svg style="left:133.1px;top:718.5px;" width="8" height="10" viewBox="0 0 8 10"><path d="M0 0l8 5-8 5z" fill="#9a9d9f"/></svg>
<svg style="left:151.2px;top:715.5px;" width="16" height="16" viewBox="0 0 16 16"><path d="M1 2h5.2l1 2H15v10H1z" fill="#cd9b54"/><rect x="3" y="6" width="10" height="6" fill="#3c3f41"/></svg>
<div class="t tr" style="left:169.5px;top:714px"><span style="color:#d0d2d4">vendor-custom</span></div>
<svg style="left:133.1px;top:737.5px;" width="8" height="10" viewBox="0 0 8 10"><path d="M0 0l8 5-8 5z" fill="#9a9d9f"/></svg>
<svg style="left:151.2px;top:734.5px;" width="16" height="16" viewBox="0 0 16 16"><path d="M1 2h5.2l1 2H15v10H1z" fill="#cd9b54"/><rect x="3" y="6" width="10" height="6" fill="#3c3f41"/></svg>
<div class="t tr" style="left:169.5px;top:733px"><span style="color:#d0d2d4">vue-projects</span></div>
<svg style="left:151.2px;top:753.5px;" width="16" height="16" viewBox="0 0 16 16"><path d="M3 1.7h6.2l3.2 3.2v9.400000000000002h-9.4z" fill="none" stroke="#a4a7a9" stroke-width="1.8" stroke-linejoin="miter"/><path d="M9.2 1.7v3.2h3.2" fill="none" stroke="#a4a7a9" stroke-width="1"/><rect x="-0.2" y="6.1" width="16.4" height="6" fill="#4aa4de"/><text x="7.999999999999999" y="11.0" text-anchor="middle" font-family="Liberation Sans,sans-serif" font-weight="bold" font-size="6" fill="#fff" letter-spacing="-0.2">JSON</text></svg>
<div class="t tr" style="left:169.5px;top:752px"><span style="color:#d0d2d4">.bowerrc</span></div>
<svg style="left:151.2px;top:772.5px;" width="16" height="16" viewBox="0 0 16 16"><path d="M3 1.7h6.2l3.2 3.2v9.400000000000002h-9.4z" fill="none" stroke="#a4a7a9" stroke-width="1.8" stroke-linejoin="miter"/><path d="M9.2 1.7v3.2h3.2" fill="none" stroke="#a4a7a9" stroke-width="1"/><rect x="-0.2" y="6.1" width="16.4" height="6" fill="#4aa4de"/><text x="7.999999999999999" y="11.0" text-anchor="middle" font-family="Liberation Sans,sans-serif" font-weight="bold" font-size="6" fill="#fff" letter-spacing="-0.2">JSON</text></svg>
<div class="t tr" style="left:169.5px;top:771px"><span style="color:#d0d2d4">bower.json</span></div>
<svg style="left:151.2px;top:791.5px;" width="16" height="16" viewBox="0 0 16 16"><path d="M2.3 1.8h5.900000000000001l3.2 3.2v9.599999999999998h-9.100000000000001z" fill="none" stroke="#a4a7a9" stroke-width="1.8" stroke-linejoin="miter"/><path d="M8.2 1.8v3.2h3.2" fill="none" stroke="#a4a7a9" stroke-width="1"/><rect x="4.1" y="5.5" width="10.6" height="6.4" fill="#f0854a"/><text x="9.399999999999999" y="11.1" text-anchor="middle" font-family="Liberation Sans,sans-serif" font-weight="bold" font-size="6.4" fill="#30180a" letter-spacing="0">JS</text></svg>
<div class="t tr" style="left:169.5px;top:790px"><span style="color:#d0d2d4">gulpfile.js</span></div>
<svg style="left:151.2px;top:810.5px;" width="16" height="16" viewBox="0 0 16 16"><path d="M3 1.7h6.2l3.2 3.2v9.400000000000002h-9.4z" fill="none" stroke="#a4a7a9" stroke-width="1.8" stroke-linejoin="miter"/><path d="M9.2 1.7v3.2h3.2" fill="none" stroke="#a4a7a9" stroke-width="1"/><rect x="-0.2" y="6.1" width="16.4" height="6" fill="#4aa4de"/><text x="7.999999999999999" y="11.0" text-anchor="middle" font-family="Liberation Sans,sans-serif" font-weight="bold" font-size="6" fill="#fff" letter-spacing="-0.2">JSON</text></svg>
<div class="t tr" style="left:169.5px;top:809px"><span style="color:#d0d2d4">package.json</span></div>
<svg style="left:113.1px;top:832.5px;" width="8" height="10" viewBox="0 0 8 10"><path d="M0 0l8 5-8 5z" fill="#9a9d9f"/></svg>
<svg style="left:131.2px;top:829.5px;" width="16" height="16" viewBox="0 0 16 16"><path d="M1 2h5.2l1 2H15v10H1z" fill="#cd9b54"/><rect x="3" y="6" width="10" height="6" fill="#3c3f41"/></svg>
<div class="t tr" style="left:149.5px;top:828px"><span style="color:#d0d2d4">protected</span></div>
<svg style="left:113.1px;top:851.5px;" width="8" height="10" viewBox="0 0 8 10"><path d="M0 0l8 5-8 5z" fill="#9a9d9f"/></svg>
<svg style="left:131.2px;top:848.5px;" width="16" height="16" viewBox="0 0 16 16"><path d="M1 2h5.2l1 2H15v10H1z" fill="#cd9b54"/><rect x="3" y="6" width="10" height="6" fill="#3c3f41"/></svg>
<div class="t tr" style="left:149.5px;top:847px"><span style="color:#d0d2d4">themes</span></div>
<svg style="left:113.1px;top:870.5px;" width="8" height="10" viewBox="0 0 8 10"><path d="M0 0l8 5-8 5z" fill="#9a9d9f"/></svg>
<svg style="left:131.2px;top:867.5px;" width="16" height="16" viewBox="0 0 16 16"><path d="M1 2h5.2l1 2H15v10H1z" fill="#cd9b54"/><rect x="3" y="6" width="10" height="6" fill="#3c3f41"/></svg>
<div class="t tr" style="left:149.5px;top:866px"><span style="color:#8a8d90">webstat</span></div>
<svg style="left:131.2px;top:886.5px;" width="16" height="16" viewBox="0 0 16 16"><rect x="3" y="3" width="10" height="10" transform="rotate(45 8 8)" fill="#d8d8d8"/><path d="M8 5v6M8 7l2.3 1.6" stroke="#3c3f41" stroke-width="1.3" fill="none"/><circle cx="8" cy="5" r="1.2" fill="#3c3f41"/><circle cx="8" cy="11" r="1.2" fill="#3c3f41"/></svg>
<div class="t tr" style="left:149.5px;top:885px"><span style="color:#d0d2d4">.gitignore</span></div>
<svg style="left:131.2px;top:905.5px;" width="16" height="16" viewBox="0 0 16 16"><path d="M2.4 1.7h6.999999999999999l3.2 3.2v9.600000000000001h-10.2z" fill="none" stroke="#b4b6b8" stroke-width="1.8" stroke-linejoin="miter"/><path d="M9.399999999999999 1.7v3.2h3.2" fill="none" stroke="#b4b6b8" stroke-width="1"/><path d="M5 8l7 6-2 .5-6-3z" fill="#e8902c"/><path d="M9 12l4 3" stroke="#d050b0" stroke-width="1.4"/></svg>
<div class="t tr" style="left:149.5px;top:904px"><span style="color:#d0d2d4">.htaccess</span></div>
<svg style="left:131.2px;top:924.5px;" width="16" height="16" viewBox="0 0 16 16"><path d="M2.4 1.7h6.999999999999999l3.2 3.2v9.600000000000001h-10.2z" fill="none" stroke="#b4b6b8" stroke-width="1.8" stroke-linejoin="miter"/><path d="M9.399999999999999 1.7v3.2h3.2" fill="none" stroke="#b4b6b8" stroke-width="1"/><rect x="5" y="7" width="2.2" height="6" fill="#e0783c"/><rect x="7.500" y="8.500" width="2.200" height="4.500" fill="#4ea5dc"/></svg>
<div class="t tr" style="left:149.5px;top:923px"><span style="color:#d0d2d4">favicon.ico</span></div>
<svg style="left:131.2px;top:943.5px;" width="16" height="16" viewBox="0 0 16 16"><path d="M2.6 1.5h6.000000000000001l3.2 3.2v9.7h-9.200000000000001z" fill="none" stroke="#a4a7a9" stroke-width="1.8" stroke-linejoin="miter"/><path d="M8.600000000000001 1.5v3.2h3.2" fill="none" stroke="#a4a7a9" stroke-width="1"/><rect x="1.7" y="6.7" width="12.7" height="6.3" fill="#b9a9fa"/><text x="8.049999999999999" y="11.5" text-anchor="middle" font-family="Liberation Sans,sans-serif" font-weight="bold" font-size="7.3" fill="#1a1030" letter-spacing="0">php</text></svg>
<div class="t tr" style="left:149.5px;top:942px"><span style="color:#8a8d90">index.php</span></div>
<svg style="left:131.2px;top:962.5px;" width="16" height="16" viewBox="0 0 16 16"><path d="M2.4 1.7h6.999999999999999l3.2 3.2v9.600000000000001h-10.2z" fill="none" stroke="#b4b6b8" stroke-width="1.8" stroke-linejoin="miter"/><path d="M9.399999999999999 1.7v3.2h3.2" fill="none" stroke="#b4b6b8" stroke-width="1"/><path d="M5 7.500h5M5 9.500h5M5 11.500h5" stroke="#4ea5dc" stroke-width="1"/></svg>
<div class="t tr" style="left:149.5px;top:961px"><span style="color:#d0d2d4">robots.txt</span></div>
<svg style="left:93.1px;top:984.5px;" width="8" height="10" viewBox="0 0 8 10"><path d="M0 0l8 5-8 5z" fill="#9a9d9f"/></svg>
<svg style="left:111.2px;top:981.5px;" width="16" height="16" viewBox="0 0 16 16"><path d="M1 2h5.2l1 2H15v10H1z" fill="#cd9b54"/><rect x="3" y="6" width="10" height="6" fill="#3c3f41"/></svg>
<div class="t tr" style="left:129.5px;top:980px"><span style="color:#d0d2d4">yiic</span></div>
<svg style="left:111.2px;top:1000.5px;" width="16" height="16" viewBox="0 0 16 16"><path d="M3 1.7h6.2l3.2 3.2v9.400000000000002h-9.4z" fill="none" stroke="#a4a7a9" stroke-width="1.8" stroke-linejoin="miter"/><path d="M9.2 1.7v3.2h3.2" fill="none" stroke="#a4a7a9" stroke-width="1"/><rect x="-0.2" y="6.1" width="16.4" height="6" fill="#4aa4de"/><text x="7.999999999999999" y="11.0" text-anchor="middle" font-family="Liberation Sans,sans-serif" font-weight="bold" font-size="6" fill="#fff" letter-spacing="-0.2">JSON</text></svg>
<div class="t tr" style="left:129.5px;top:999px"><span style="color:#d0d2d4">composer.json</span></div>
<svg style="left:111.2px;top:1019.5px;" width="16" height="16" viewBox="0 0 16 16"><rect x="3" y="1" width="3" height="14" fill="#d9a860"/><rect x="10" y="1" width="3" height="14" fill="#d9a860"/><path d="M8 1v14" stroke="#bbb" stroke-width="1.6" stroke-dasharray="1.2 1.2"/></svg>
<div class="t tr" style="left:129.5px;top:1018px"><span class="tb" style="width:91px"><b style="background:#585b5e"></b><b style="background:#56595c"></b><b style="background:#575a5d"></b><b style="background:#515457"></b><b style="background:#636669"></b><b style="background:#5c5f62"></b><b style="background:#686b6e"></b><b style="background:#5e6164"></b><b style="background:#4e5154"></b><b style="background:#4c4f52"></b><b style="background:#66696c"></b><b style="background:#5e6164"></b><b style="background:#707376"></b><b style="background:#55585b"></b><b style="background:#535659"></b><b style="background:#4f5255"></b><b style="background:#525558"></b><b style="background:#4e5154"></b><b style="background:#636669"></b><b style="background:#575a5d"></b><b style="background:#5c5f62"></b><b style="background:#535659"></b><b style="background:#535659"></b><b style="background:#4e5154"></b><b style="background:#66696c"></b><b style="background:#5d6063"></b><b style="background:#6c6f72"></b><b style="background:#575a5d"></b></span><span style="color:#d0d2d4">.zip</span></div>
<svg style="left:91.2px;top:1038.5px;" width="16" height="16" viewBox="0 0 16 16"><rect x="1" y="4" width="2" height="11" fill="#aaa"/><rect x="4" y="4" width="2" height="11" fill="#aaa"/><rect x="7" y="1" width="3.2" height="14" fill="#e0604c"/><rect x="11" y="5" width="3.5" height="10" fill="#4ea5dc"/><rect x="0.5" y="13" width="10" height="2" fill="#888" opacity=".6"/></svg>
<div class="t tr" style="left:109.5px;top:1037px"><span style="color:#d0d2d4">External Libraries</span></div>
<div style="left:390.5px;top:101px;width:935px;height:24px;background:#3c3f41;"></div>
<div style="left:390.5px;top:124.5px;width:935px;height:1px;background:#2e3032;"></div>
<div style="left:482.7px;top:101.5px;width:1px;height:23px;background:#2e3032;"></div>
<svg style="left:398.2px;top:104.5px;" width="16" height="16" viewBox="0 0 16 16"><path d="M3.3 1.7h6.199999999999998l3.2 3.2v9.400000000000002h-9.399999999999999z" fill="none" stroke="#a4a7a9" stroke-width="1.8" stroke-linejoin="miter"/><path d="M9.5 1.7v3.2h3.2" fill="none" stroke="#a4a7a9" stroke-width="1"/><rect x="1.6" y="6" width="12.8" height="6.8" rx="3.2" fill="#fbe3e6" stroke="#e8566e" stroke-width="1.5"/><text x="8" y="11.6" text-anchor="middle" font-family="Liberation Sans,sans-serif" font-weight="bold" font-size="6" fill="#111" letter-spacing="-.3">M↓</text></svg>
<div class="t" style="left:418.3px;top:105.6px;height:16px;line-height:16px;font-size:12.2px;color:#d6d8da;">plan.md</div>
<svg style="left:467.9px;top:110px;" width="7" height="7" viewBox="0 0 7 7"><path d="M.5.5l6 6M6.500.5l-6 6" stroke="#86898b" stroke-width="1.400"/></svg>
<div style="left:592.5px;top:101.5px;width:1px;height:23px;background:#2e3032;"></div>
<svg style="left:491.3px;top:104.5px;" width="16" height="16" viewBox="0 0 16 16"><path d="M3.3 1.7h6.199999999999998l3.2 3.2v9.400000000000002h-9.399999999999999z" fill="none" stroke="#a4a7a9" stroke-width="1.8" stroke-linejoin="miter"/><path d="M9.5 1.7v3.2h3.2" fill="none" stroke="#a4a7a9" stroke-width="1"/><rect x="1.6" y="6" width="12.8" height="6.8" rx="3.2" fill="#fbe3e6" stroke="#e8566e" stroke-width="1.5"/><text x="8" y="11.6" text-anchor="middle" font-family="Liberation Sans,sans-serif" font-weight="bold" font-size="6" fill="#111" letter-spacing="-.3">M↓</text></svg>
<div class="t" style="left:511.2px;top:105.6px;height:16px;line-height:16px;font-size:12.2px;color:#5f9bd6;">routing.md</div>
<svg style="left:578.1px;top:110px;" width="7" height="7" viewBox="0 0 7 7"><path d="M.5.5l6 6M6.500.5l-6 6" stroke="#86898b" stroke-width="1.400"/></svg>
<div style="left:674.5px;top:101.5px;width:1px;height:23px;background:#2e3032;"></div>
<svg style="left:602.7px;top:104.5px;" width="16" height="16" viewBox="0 0 16 16"><path d="M2.3 1.8h5.900000000000001l3.2 3.2v9.599999999999998h-9.100000000000001z" fill="none" stroke="#a4a7a9" stroke-width="1.8" stroke-linejoin="miter"/><path d="M8.2 1.8v3.2h3.2" fill="none" stroke="#a4a7a9" stroke-width="1"/><rect x="4.1" y="5.5" width="10.6" height="6.4" fill="#f0854a"/><text x="9.399999999999999" y="11.1" text-anchor="middle" font-family="Liberation Sans,sans-serif" font-weight="bold" font-size="6.4" fill="#30180a" letter-spacing="0">JS</text></svg>
<div class="t" style="left:621.4px;top:105.6px;height:16px;line-height:16px;font-size:12.2px;color:#d6d8da;">app.js</div>
<svg style="left:659.8px;top:110px;" width="7" height="7" viewBox="0 0 7 7"><path d="M.5.5l6 6M6.500.5l-6 6" stroke="#86898b" stroke-width="1.400"/></svg>
<div style="left:675.5px;top:101.5px;width:106.5px;height:23px;background:#4e5254;"></div>
<div style="left:781px;top:101.5px;width:1px;height:23px;background:#2e3032;"></div>
<svg style="left:684.9px;top:104.5px;" width="16" height="16" viewBox="0 0 16 16"><path d="M2.3 1.8h5.900000000000001l3.2 3.2v9.599999999999998h-9.100000000000001z" fill="none" stroke="#a4a7a9" stroke-width="1.8" stroke-linejoin="miter"/><path d="M8.2 1.8v3.2h3.2" fill="none" stroke="#a4a7a9" stroke-width="1"/><rect x="4.1" y="5.5" width="10.6" height="6.4" fill="#f0854a"/><text x="9.399999999999999" y="11.1" text-anchor="middle" font-family="Liberation Sans,sans-serif" font-weight="bold" font-size="6.4" fill="#30180a" letter-spacing="0">JS</text></svg>
<div class="t" style="left:703.3px;top:105.6px;height:16px;line-height:16px;font-size:12.2px;color:#d6d8da;">statuses.js</div>
<svg style="left:767px;top:110px;" width="7" height="7" viewBox="0 0 7 7"><path d="M.5.5l6 6M6.500.5l-6 6" stroke="#86898b" stroke-width="1.400"/></svg>
<div style="left:390.5px;top:125.5px;width:935px;height:1101.5px;background:#2b2b2b;"></div>
<div style="left:390.5px;top:125.5px;width:54px;height:1101.5px;background:#313335;"></div>
<div style="left:445px;top:517px;width:845px;height:15px;background:#323232;"></div>
<div style="left:1290.5px;top:125.5px;width:1px;height:1101.5px;background:#414345;"></div>
<div style="left:1313px;top:128px;width:10.5px;height:10.5px;background:#d9a30e;"></div>
<div style="left:1315px;top:144.5px;width:7px;height:776px;background:#3a3a3a;border-radius:3.5px"></div>
<div style="left:1311px;top:620.1px;width:14px;height:1.6px;background:#d9a30e;"></div>
<div style="left:1311px;top:652.1px;width:14px;height:1.6px;background:#d9a30e;"></div>
<div style="left:1325px;top:101px;width:1px;height:1126px;background:#555759;"></div>
<div style="left:480.7px;top:217px;width:1px;height:75px;background:#3a3a3a;"></div>
<div style="left:480.7px;top:307px;width:1px;height:930px;background:#3a3a3a;"></div>
<div style="left:508.7px;top:247px;width:1px;height:45px;background:#3a3a3a;"></div>
<div style="left:508.7px;top:322px;width:1px;height:570px;background:#3a3a3a;"></div>
<div style="left:508.7px;top:922px;width:1px;height:315px;background:#3a3a3a;"></div>
<div style="left:536.7px;top:337px;width:1px;height:375px;background:#3a3a3a;"></div>
<div style="left:536.7px;top:742px;width:1px;height:30px;background:#3a3a3a;"></div>
<div style="left:536.7px;top:817px;width:1px;height:15px;background:#3a3a3a;"></div>
<div style="left:536.7px;top:862px;width:1px;height:15px;background:#3a3a3a;"></div>
<div style="left:536.7px;top:937px;width:1px;height:210px;background:#3a3a3a;"></div>
<div style="left:536.7px;top:1177px;width:1px;height:60px;background:#3a3a3a;"></div>
<div style="left:564.7px;top:367px;width:1px;height:30px;background:#3a3a3a;"></div>
<div style="left:564.7px;top:427px;width:1px;height:270px;background:#3a3a3a;"></div>
<div style="left:564.7px;top:952px;width:1px;height:15px;background:#3a3a3a;"></div>
<div style="left:564.7px;top:982px;width:1px;height:105px;background:#3a3a3a;"></div>
<div style="left:564.7px;top:1102px;width:1px;height:30px;background:#3a3a3a;"></div>
<div style="left:564.7px;top:1192px;width:1px;height:30px;background:#3a3a3a;"></div>
<div style="left:592.7px;top:442px;width:1px;height:105px;background:#3a3a3a;"></div>
<div style="left:592.7px;top:577px;width:1px;height:105px;background:#3a3a3a;"></div>
<div style="left:592.7px;top:1027px;width:1px;height:15px;background:#3a3a3a;"></div>
<div style="left:592.7px;top:1057px;width:1px;height:15px;background:#3a3a3a;"></div>
<div style="left:620.7px;top:472px;width:1px;height:60px;background:#3a3a3a;"></div>
<div style="left:620.7px;top:607px;width:1px;height:60px;background:#3a3a3a;"></div>
<div style="left:648.7px;top:487px;width:1px;height:30px;background:#3a3a3a;"></div>
<div style="left:648.7px;top:622px;width:1px;height:30px;background:#3a3a3a;"></div>
<div style="left:480.7px;top:217px;width:1px;height:1020px;background:#3a3a3a;"></div>
<div style="left:444px;top:125.5px;width:1px;height:1101.5px;background:#5a5a5a;"></div>
<div style="left:434.8px;top:472px;width:1.4px;height:60px;background:#a9b4c0;"></div>
<div class="ln" style="left:391px;top:128.5px;width:18.7px;height:1100px;overflow:hidden"><div>1</div><div>2</div><div>3</div><div>4</div><div>5</div><div>6</div><div>7</div><div>8</div><div>9</div><div>10</div><div>11</div><div>12</div><div>13</div><div>14</div><div>15</div><div>16</div><div>17</div><div>18</div><div>19</div><div>20</div><div>21</div><div>22</div><div>23</div><div>24</div><div>25</div><div>26</div><div>27</div><div>28</div><div>29</div><div>30</div><div>31</div><div>32</div><div>33</div><div>34</div><div>35</div><div>36</div><div>37</div><div>38</div><div>39</div><div>40</div><div>41</div><div>42</div><div>43</div><div>44</div><div>45</div><div>46</div><div>47</div><div>48</div><div>49</div><div>50</div><div>51</div><div>52</div><div>53</div><div>54</div><div>55</div><div>56</div><div>57</div><div>58</div><div>59</div><div>60</div><div>61</div><div>62</div><div>63</div><div>64</div><div>65</div><div>66</div><div>67</div><div>68</div><div>69</div><div>70</div><div>71</div><div>72</div><div>73</div><div>74</div></div>
<div class="code" style="left:450.4px;top:128px;height:1100px;width:840px;overflow:hidden"><div><d>/**</d></div><div><d> * Created by petja on 16/06/16.</d></div><div><d> */</d></div><div> </div><div>define([<s>'vue'</s><o>,</o> <s>'jquery'</s><o>,</o> <s>'datepicker'</s>]<o>,</o> <k>function</k> (Vue<o>,</o> $) {</div><div>    <k>var</k> STATUSES = {</div><div>        <p>config</p>: {}<o>,</o></div><div>        <p>instances</p>: {</div><div>            <p>vue</p>: {}<o>,</o></div><div>            <p>$datePickerFrom</p>: {}<o>,</o></div><div>            <p>$datePickerTo</p>: {}</div><div>        }<o>,</o></div><div>        <f>init</f>: <k>function</k> () {</div><div>            STATUSES.<p>instances</p>.<p>vue</p> = <k>new</k> Vue({</div><div>                <p>el</p>: <s>"#toolbar"</s><o>,</o></div><div>                <p>data</p>: {</div><div>                    <p>currentUrl</p>: <s>''</s><o>,</o></div><div>                    <p>isNextTickRestore</p>: <k>false</k></div><div>                }<o>,</o></div><div>                <p>watch</p>: {</div><div>                    <s>'dateFrom'</s>: <k>function</k> (val<o>,</o> oldVal) {</div><div>                        <k>if</k>(<k>typeof</k> oldVal === <s>'undefined'</s>) <k>return false</k><o>;</o></div><div>                        <k>if</k>(<k>this</k>.<p>$data</p>.<f>dateFrom</f> &amp;&amp; <k>this</k>.<p>$data</p>.<f>dateTo</f>){</div><div>                            STATUSES.<p>helperMethods</p>.<f>processDate</f><m>(</m>{</div><div>                                <p>type</p>: <s>'from'</s><o>,</o></div><div>                                <p>value</p>: oldVal</div><div>                            }<m>)</m><u>;</u></div><div>                        }</div><div>                    }<o>,</o></div><div>                    <s>'dateTo'</s>: <k>function</k> (val<o>,</o> oldVal) {</div><div>                        <k>if</k> (<k>typeof</k> oldVal === <s>'undefined'</s>) <k>return false</k><o>;</o></div><div>                        <k>if</k> (<k>this</k>.<p>$data</p>.<f>dateFrom</f> &amp;&amp; <k>this</k>.<p>$data</p>.<f>dateTo</f>) {</div><div>                            STATUSES.<p>helperMethods</p>.<f>processDate</f>({</div><div>                                <p>type</p>: <s>'to'</s><o>,</o></div><div>                                <p>value</p>: oldVal</div><div>                            })<o>;</o></div><div>                        }</div><div>                    }</div><div>                }</div><div>            })<o>;</o></div><div>            <k>var</k> datePickerCommonSettings = {</div><div>                <p>format</p>: <s>'DD-MM-<w>YYYY</w>'</s><o>,</o></div><div>                <p>locale</p>: <s>'ru'</s></div><div>            }<o>;</o></div><div>            <c>// $.extend({}, datePickerCommonSettings, {locale: 'ru'})</c></div><div>            <k>var</k> <g>$datePickerFrom</g> = $(<s>'</s><j>#dateFrom</j><s>'</s>).<f>datetimepicker</f>(</div><div>                datePickerCommonSettings</div><div>            )<o>;</o></div><div>            <k>var</k> <g>$datePickerTo</g> = $(<s>'</s><j>#dateTo</j><s>'</s>).<f>datetimepicker</f>(</div><div>                datePickerCommonSettings</div><div>            )<o>;</o></div><div>        }<o>,</o></div><div>        <p>helperMethods</p>: {</div><div>            <f>processDate</f>: <k>function</k> (restoreData) {</div><div>                <k>var</k> timestampFrom = <k>this</k>.<f>getTimestamp</f>(STATUSES.<p>instances</p>.<p>vue</p>.<p>$data</p>.<p>dateFrom</p>)<o>,</o></div><div>                    timestampTo = <k>this</k>.<f>getTimestamp</f>(STATUSES.<p>instances</p>.<p>vue</p>.<p>$data</p>.<p>dateTo</p>)<o>;</o></div><div>                <k>if</k> (timestampFrom &gt; timestampTo) {</div><div>                    <f>alert</f>(<s>'Дата "От" не может быть меньше даты "До"'</s>)<o>;</o></div><div>                    STATUSES.<p>instances</p>.<p>vue</p>.<f>$set</f>(<s>'isNextTickRestore'</s><o>,</o> <k>true</k>)<o>;</o></div><div>                    <k>if</k> (restoreData.<p>type</p> == <s>'from'</s>) {</div><div>                        STATUSES.<p>instances</p>.<p>vue</p>.<p>$data</p>.<p>dateFrom</p> = restoreData.<p>value</p><o>;</o></div><div>                    } <k>else if</k> (restoreData.<p>type</p> == <s>'to'</s>) {</div><div>                        STATUSES.<p>instances</p>.<p>vue</p>.<p>$data</p>.<p>dateTo</p> = restoreData.<p>value</p><o>;</o></div><div>                    }</div><div>                }<k>else</k>{</div><div>                    <c>// редирект на новые даты</c></div><div>                    <k>this</k>.<f>updateLocationWithNewDates</f>()<o>;</o></div><div>                }</div><div>            }<o>,</o></div><div>            <f>updateLocationWithNewDates</f>: <k>function</k> () {</div><div>                <k>if</k>(STATUSES.<p>instances</p>.<p>vue</p>.<p>$data</p>.<p>isNextTickRestore</p>){</div><div>                    STATUSES.<p>instances</p>.<p>vue</p>.<f>$set</f>(<s>'isNextTickRestore'</s><o>,</o> <k>false</k>)<o>;</o></div><div>                    <k>return false</k><o>;</o></div><div>                }</div></div>
<svg style="left:440px;top:130.1px;" width="9" height="11" viewBox="0 0 9 11"><path d="M.5.5h8v6L4.500 10.500.5 6.500z" fill="#2b2b2b" stroke="#606264"/><path d="M2.500 4h4" stroke="#7a7c7e" stroke-width=".9"/></svg>
<svg style="left:440px;top:190.1px;" width="9" height="11" viewBox="0 0 9 11"><path d="M.5.5h8v6L4.500 10.500.5 6.500z" fill="#2b2b2b" stroke="#606264"/><path d="M2.500 4h4" stroke="#7a7c7e" stroke-width=".9"/></svg>
<svg style="left:440px;top:205.1px;" width="9" height="11" viewBox="0 0 9 11"><path d="M.5.5h8v6L4.500 10.500.5 6.500z" fill="#2b2b2b" stroke="#606264"/><path d="M2.500 4h4" stroke="#7a7c7e" stroke-width=".9"/></svg>
<svg style="left:440px;top:235.1px;" width="9" height="11" viewBox="0 0 9 11"><path d="M.5.5h8v6L4.500 10.500.5 6.500z" fill="#2b2b2b" stroke="#606264"/><path d="M2.500 4h4" stroke="#7a7c7e" stroke-width=".9"/></svg>
<svg style="left:440px;top:310.1px;" width="9" height="11" viewBox="0 0 9 11"><path d="M.5.5h8v6L4.500 10.500.5 6.500z" fill="#2b2b2b" stroke="#606264"/><path d="M2.500 4h4" stroke="#7a7c7e" stroke-width=".9"/></svg>
<svg style="left:440px;top:325.1px;" width="9" height="11" viewBox="0 0 9 11"><path d="M.5.5h8v6L4.500 10.500.5 6.500z" fill="#2b2b2b" stroke="#606264"/><path d="M2.500 4h4" stroke="#7a7c7e" stroke-width=".9"/></svg>
<svg style="left:440px;top:355.1px;" width="9" height="11" viewBox="0 0 9 11"><path d="M.5.5h8v6L4.500 10.500.5 6.500z" fill="#2b2b2b" stroke="#606264"/><path d="M2.500 4h4" stroke="#7a7c7e" stroke-width=".9"/></svg>
<svg style="left:440px;top:415.1px;" width="9" height="11" viewBox="0 0 9 11"><path d="M.5.5h8v6L4.500 10.500.5 6.500z" fill="#2b2b2b" stroke="#606264"/><path d="M2.500 4h4" stroke="#7a7c7e" stroke-width=".9"/></svg>
<svg style="left:440px;top:430.1px;" width="9" height="11" viewBox="0 0 9 11"><path d="M.5.5h8v6L4.500 10.500.5 6.500z" fill="#2b2b2b" stroke="#606264"/><path d="M2.500 4h4" stroke="#7a7c7e" stroke-width=".9"/></svg>
<svg style="left:440px;top:460.1px;" width="9" height="11" viewBox="0 0 9 11"><path d="M.5.5h8v6L4.500 10.500.5 6.500z" fill="#2b2b2b" stroke="#606264"/><path d="M2.500 4h4" stroke="#7a7c7e" stroke-width=".9"/></svg>
<svg style="left:440px;top:475.1px;" width="9" height="11" viewBox="0 0 9 11"><path d="M.5.5h8v6L4.500 10.500.5 6.500z" fill="#2b2b2b" stroke="#606264"/><path d="M2.500 4h4" stroke="#7a7c7e" stroke-width=".9"/></svg>
<svg style="left:440px;top:565.1px;" width="9" height="11" viewBox="0 0 9 11"><path d="M.5.5h8v6L4.500 10.500.5 6.500z" fill="#2b2b2b" stroke="#606264"/><path d="M2.500 4h4" stroke="#7a7c7e" stroke-width=".9"/></svg>
<svg style="left:440px;top:595.1px;" width="9" height="11" viewBox="0 0 9 11"><path d="M.5.5h8v6L4.500 10.500.5 6.500z" fill="#2b2b2b" stroke="#606264"/><path d="M2.500 4h4" stroke="#7a7c7e" stroke-width=".9"/></svg>
<svg style="left:440px;top:610.1px;" width="9" height="11" viewBox="0 0 9 11"><path d="M.5.5h8v6L4.500 10.500.5 6.500z" fill="#2b2b2b" stroke="#606264"/><path d="M2.500 4h4" stroke="#7a7c7e" stroke-width=".9"/></svg>
<svg style="left:440px;top:730.1px;" width="9" height="11" viewBox="0 0 9 11"><path d="M.5.5h8v6L4.500 10.500.5 6.500z" fill="#2b2b2b" stroke="#606264"/><path d="M2.500 4h4" stroke="#7a7c7e" stroke-width=".9"/></svg>
<svg style="left:440px;top:910.1px;" width="9" height="11" viewBox="0 0 9 11"><path d="M.5.5h8v6L4.500 10.500.5 6.500z" fill="#2b2b2b" stroke="#606264"/><path d="M2.500 4h4" stroke="#7a7c7e" stroke-width=".9"/></svg>
<svg style="left:440px;top:925.1px;" width="9" height="11" viewBox="0 0 9 11"><path d="M.5.5h8v6L4.500 10.500.5 6.500z" fill="#2b2b2b" stroke="#606264"/><path d="M2.500 4h4" stroke="#7a7c7e" stroke-width=".9"/></svg>
<svg style="left:440px;top:970.1px;" width="9" height="11" viewBox="0 0 9 11"><path d="M.5.5h8v6L4.500 10.500.5 6.500z" fill="#2b2b2b" stroke="#606264"/><path d="M2.500 4h4" stroke="#7a7c7e" stroke-width=".9"/></svg>
<svg style="left:440px;top:1015.1px;" width="9" height="11" viewBox="0 0 9 11"><path d="M.5.5h8v6L4.500 10.500.5 6.500z" fill="#2b2b2b" stroke="#606264"/><path d="M2.500 4h4" stroke="#7a7c7e" stroke-width=".9"/></svg>
<svg style="left:440px;top:1090.1px;" width="9" height="11" viewBox="0 0 9 11"><path d="M.5.5h8v6L4.500 10.500.5 6.500z" fill="#2b2b2b" stroke="#606264"/><path d="M2.500 4h4" stroke="#7a7c7e" stroke-width=".9"/></svg>
<svg style="left:440px;top:1165.1px;" width="9" height="11" viewBox="0 0 9 11"><path d="M.5.5h8v6L4.500 10.500.5 6.500z" fill="#2b2b2b" stroke="#606264"/><path d="M2.500 4h4" stroke="#7a7c7e" stroke-width=".9"/></svg>
<svg style="left:440px;top:1180.1px;" width="9" height="11" viewBox="0 0 9 11"><path d="M.5.5h8v6L4.500 10.500.5 6.500z" fill="#2b2b2b" stroke="#606264"/><path d="M2.500 4h4" stroke="#7a7c7e" stroke-width=".9"/></svg>
<svg style="left:440px;top:159.5px;" width="9" height="11" viewBox="0 0 9 11"><path d="M.5 10.500h8v-6L4.500.5.5 4.500z" fill="#2b2b2b" stroke="#606264"/><path d="M2.500 7h4" stroke="#7a7c7e" stroke-width=".9"/></svg>
<svg style="left:440px;top:294.5px;" width="9" height="11" viewBox="0 0 9 11"><path d="M.5 10.500h8v-6L4.500.5.5 4.500z" fill="#2b2b2b" stroke="#606264"/><path d="M2.500 7h4" stroke="#7a7c7e" stroke-width=".9"/></svg>
<svg style="left:440px;top:399.5px;" width="9" height="11" viewBox="0 0 9 11"><path d="M.5 10.500h8v-6L4.500.5.5 4.500z" fill="#2b2b2b" stroke="#606264"/><path d="M2.500 7h4" stroke="#7a7c7e" stroke-width=".9"/></svg>
<svg style="left:440px;top:519.5px;" width="9" height="11" viewBox="0 0 9 11"><path d="M.5 10.500h8v-6L4.500.5.5 4.500z" fill="#2b2b2b" stroke="#606264"/><path d="M2.500 7h4" stroke="#7a7c7e" stroke-width=".9"/></svg>
<svg style="left:440px;top:534.5px;" width="9" height="11" viewBox="0 0 9 11"><path d="M.5 10.500h8v-6L4.500.5.5 4.500z" fill="#2b2b2b" stroke="#606264"/><path d="M2.500 7h4" stroke="#7a7c7e" stroke-width=".9"/></svg>
<svg style="left:440px;top:549.5px;" width="9" height="11" viewBox="0 0 9 11"><path d="M.5 10.500h8v-6L4.500.5.5 4.500z" fill="#2b2b2b" stroke="#606264"/><path d="M2.500 7h4" stroke="#7a7c7e" stroke-width=".9"/></svg>
<svg style="left:440px;top:654.5px;" width="9" height="11" viewBox="0 0 9 11"><path d="M.5 10.500h8v-6L4.500.5.5 4.500z" fill="#2b2b2b" stroke="#606264"/><path d="M2.500 7h4" stroke="#7a7c7e" stroke-width=".9"/></svg>
<svg style="left:440px;top:669.5px;" width="9" height="11" viewBox="0 0 9 11"><path d="M.5 10.500h8v-6L4.500.5.5 4.500z" fill="#2b2b2b" stroke="#606264"/><path d="M2.500 7h4" stroke="#7a7c7e" stroke-width=".9"/></svg>
<svg style="left:440px;top:684.5px;" width="9" height="11" viewBox="0 0 9 11"><path d="M.5 10.500h8v-6L4.500.5.5 4.500z" fill="#2b2b2b" stroke="#606264"/><path d="M2.500 7h4" stroke="#7a7c7e" stroke-width=".9"/></svg>
<svg style="left:440px;top:699.5px;" width="9" height="11" viewBox="0 0 9 11"><path d="M.5 10.500h8v-6L4.500.5.5 4.500z" fill="#2b2b2b" stroke="#606264"/><path d="M2.500 7h4" stroke="#7a7c7e" stroke-width=".9"/></svg>
<svg style="left:440px;top:714.5px;" width="9" height="11" viewBox="0 0 9 11"><path d="M.5 10.500h8v-6L4.500.5.5 4.500z" fill="#2b2b2b" stroke="#606264"/><path d="M2.500 7h4" stroke="#7a7c7e" stroke-width=".9"/></svg>
<svg style="left:440px;top:774.5px;" width="9" height="11" viewBox="0 0 9 11"><path d="M.5 10.500h8v-6L4.500.5.5 4.500z" fill="#2b2b2b" stroke="#606264"/><path d="M2.500 7h4" stroke="#7a7c7e" stroke-width=".9"/></svg>
<svg style="left:440px;top:894.5px;" width="9" height="11" viewBox="0 0 9 11"><path d="M.5 10.500h8v-6L4.500.5.5 4.500z" fill="#2b2b2b" stroke="#606264"/><path d="M2.500 7h4" stroke="#7a7c7e" stroke-width=".9"/></svg>
<svg style="left:440px;top:1044.5px;" width="9" height="11" viewBox="0 0 9 11"><path d="M.5 10.500h8v-6L4.500.5.5 4.500z" fill="#2b2b2b" stroke="#606264"/><path d="M2.500 7h4" stroke="#7a7c7e" stroke-width=".9"/></svg>
<svg style="left:440px;top:1074.5px;" width="9" height="11" viewBox="0 0 9 11"><path d="M.5 10.500h8v-6L4.500.5.5 4.500z" fill="#2b2b2b" stroke="#606264"/><path d="M2.500 7h4" stroke="#7a7c7e" stroke-width=".9"/></svg>
<svg style="left:440px;top:1134.5px;" width="9" height="11" viewBox="0 0 9 11"><path d="M.5 10.500h8v-6L4.500.5.5 4.500z" fill="#2b2b2b" stroke="#606264"/><path d="M2.500 7h4" stroke="#7a7c7e" stroke-width=".9"/></svg>
<svg style="left:440px;top:1149.5px;" width="9" height="11" viewBox="0 0 9 11"><path d="M.5 10.500h8v-6L4.500.5.5 4.500z" fill="#2b2b2b" stroke="#606264"/><path d="M2.500 7h4" stroke="#7a7c7e" stroke-width=".9"/></svg>
<svg style="left:440px;top:1224.5px;" width="9" height="11" viewBox="0 0 9 11"><path d="M.5 10.500h8v-6L4.500.5.5 4.500z" fill="#2b2b2b" stroke="#606264"/><path d="M2.500 7h4" stroke="#7a7c7e" stroke-width=".9"/></svg>
<svg style="left:458.25px;top:513.5px;" width="11.5" height="16" viewBox="0 0 10 14"><circle cx="5" cy="5" r="4.800" fill="#f2b950"/><path d="M3 5l1 1.500 1-1.500 1 1.500L7 5" stroke="#fff3d0" stroke-width=".8" fill="none"/><rect x="2.800" y="9.500" width="4.400" height="1.300" fill="#b8babc"/><rect x="2.800" y="11.300" width="4.400" height="1.300" fill="#b8babc"/><rect x="3.500" y="13" width="3" height="1" fill="#b8babc"/></svg>
<div style="left:1326px;top:101px;width:1014px;height:74px;background:#3c3f41;"></div>
<div style="left:1326px;top:124.5px;width:1014px;height:1px;background:#2e3032;"></div>
<div style="left:1326px;top:147.5px;width:1014px;height:1px;background:#2e3032;"></div>
<div style="left:1326px;top:174px;width:1014px;height:1px;background:#2e3032;"></div>
<div style="left:1326px;top:101.5px;width:178px;height:23px;background:#4e5254;"></div>
<div style="left:1503px;top:101.5px;width:1px;height:23px;background:#2e3032;"></div>
<svg style="left:1367.5px;top:104.5px;" width="16" height="16" viewBox="0 0 16 16"><path d="M3.3 1.7h6.199999999999998l3.2 3.2v9.400000000000002h-9.399999999999999z" fill="none" stroke="#a4a7a9" stroke-width="1.8" stroke-linejoin="miter"/><path d="M9.5 1.7v3.2h3.2" fill="none" stroke="#a4a7a9" stroke-width="1"/><rect x="1.6" y="6" width="12.8" height="6.8" rx="3.2" fill="#fbe3e6" stroke="#e8566e" stroke-width="1.5"/><text x="8" y="11.6" text-anchor="middle" font-family="Liberation Sans,sans-serif" font-weight="bold" font-size="6" fill="#111" letter-spacing="-.3">M↓</text></svg>
<div class="t" style="left:1387px;top:105.6px;height:16px;line-height:16px;font-size:12.2px;color:#5f9bd6;">routing.md</div>
<svg style="left:1489px;top:110px;" width="7" height="7" viewBox="0 0 7 7"><path d="M.5.5l6 6M6.500.5l-6 6" stroke="#86898b" stroke-width="1.400"/></svg>
<div style="left:1727px;top:101.5px;width:1px;height:23px;background:#2e3032;"></div>
<svg style="left:1549px;top:104.5px;" width="16" height="16" viewBox="0 0 16 16"><path d="M2.3 2h5.699999999999998l3.2 3.2v8.8h-8.899999999999999z" fill="none" stroke="#a4a7a9" stroke-width="1.8" stroke-linejoin="miter"/><path d="M7.999999999999999 2v3.2h3.2" fill="none" stroke="#a4a7a9" stroke-width="1"/><rect x="1.4" y="5.8" width="13.2" height="5.8" fill="#f0a832"/><text x="8.0" y="10.5" text-anchor="middle" font-family="Liberation Sans,sans-serif" font-weight="bold" font-size="6" fill="#2a1a00" letter-spacing="0">SQL</text></svg>
<div class="t" style="left:1656.5px;top:105.6px;height:16px;line-height:16px;font-size:12.2px;color:#d6d8da;">sql</div>
<svg style="left:1713px;top:110px;" width="7" height="7" viewBox="0 0 7 7"><path d="M.5.5l6 6M6.500.5l-6 6" stroke="#86898b" stroke-width="1.400"/></svg>
<div class="bl" style="left:1566.5px;top:106px;width:89px;height:13px"><i style="left:0.00px;top:0.00px;width:6.66px;height:6.80px;background:#5f6265"></i><i style="left:6.36px;top:0.00px;width:6.66px;height:6.80px;background:#616467"></i><i style="left:12.71px;top:0.00px;width:6.66px;height:6.80px;background:#5c5f62"></i><i style="left:19.07px;top:0.00px;width:6.66px;height:6.80px;background:#535659"></i><i style="left:25.43px;top:0.00px;width:6.66px;height:6.80px;background:#64676a"></i><i style="left:31.79px;top:0.00px;width:6.66px;height:6.80px;background:#6a6d70"></i><i style="left:38.14px;top:0.00px;width:6.66px;height:6.80px;background:#5e6164"></i><i style="left:44.50px;top:0.00px;width:6.66px;height:6.80px;background:#5c5f62"></i><i style="left:50.86px;top:0.00px;width:6.66px;height:6.80px;background:#54575a"></i><i style="left:57.21px;top:0.00px;width:6.66px;height:6.80px;background:#4b4e51"></i><i style="left:63.57px;top:0.00px;width:6.66px;height:6.80px;background:#54575a"></i><i style="left:69.93px;top:0.00px;width:6.66px;height:6.80px;background:#5d6063"></i><i style="left:76.29px;top:0.00px;width:6.66px;height:6.80px;background:#4e5154"></i><i style="left:82.64px;top:0.00px;width:6.66px;height:6.80px;background:#636669"></i><i style="left:0.00px;top:6.50px;width:6.66px;height:6.80px;background:#55585b"></i><i style="left:6.36px;top:6.50px;width:6.66px;height:6.80px;background:#505356"></i><i style="left:12.71px;top:6.50px;width:6.66px;height:6.80px;background:#676a6d"></i><i style="left:19.07px;top:6.50px;width:6.66px;height:6.80px;background:#616467"></i><i style="left:25.43px;top:6.50px;width:6.66px;height:6.80px;background:#6c6f72"></i><i style="left:31.79px;top:6.50px;width:6.66px;height:6.80px;background:#64676a"></i><i style="left:38.14px;top:6.50px;width:6.66px;height:6.80px;background:#525558"></i><i style="left:44.50px;top:6.50px;width:6.66px;height:6.80px;background:#56595c"></i><i style="left:50.86px;top:6.50px;width:6.66px;height:6.80px;background:#585b5e"></i><i style="left:57.21px;top:6.50px;width:6.66px;height:6.80px;background:#4e5154"></i><i style="left:63.57px;top:6.50px;width:6.66px;height:6.80px;background:#636669"></i><i style="left:69.93px;top:6.50px;width:6.66px;height:6.80px;background:#5a5d60"></i><i style="left:76.29px;top:6.50px;width:6.66px;height:6.80px;background:#505356"></i><i style="left:82.64px;top:6.50px;width:6.66px;height:6.80px;background:#64676a"></i></div>
<div style="left:1985.5px;top:101.5px;width:1px;height:23px;background:#2e3032;"></div>
<svg style="left:1773px;top:104.5px;" width="16" height="16" viewBox="0 0 16 16"><path d="M2.3 2h5.699999999999998l3.2 3.2v8.8h-8.899999999999999z" fill="none" stroke="#a4a7a9" stroke-width="1.8" stroke-linejoin="miter"/><path d="M7.999999999999999 2v3.2h3.2" fill="none" stroke="#a4a7a9" stroke-width="1"/><rect x="1.4" y="5.8" width="13.2" height="5.8" fill="#f0a832"/><text x="8.0" y="10.5" text-anchor="middle" font-family="Liberation Sans,sans-serif" font-weight="bold" font-size="6" fill="#2a1a00" letter-spacing="0">SQL</text></svg>
<div class="t" style="left:1886px;top:105.6px;height:16px;line-height:16px;font-size:12.2px;color:#d6d8da;">eads.sql</div>
<svg style="left:1971px;top:110px;" width="7" height="7" viewBox="0 0 7 7"><path d="M.5.5l6 6M6.500.5l-6 6" stroke="#86898b" stroke-width="1.400"/></svg>
<div class="bl" style="left:1791px;top:106px;width:94px;height:13px"><i style="left:0.00px;top:0.00px;width:7.01px;height:6.80px;background:#54575a"></i><i style="left:6.71px;top:0.00px;width:7.01px;height:6.80px;background:#4b4e51"></i><i style="left:13.43px;top:0.00px;width:7.01px;height:6.80px;background:#6c6f72"></i><i style="left:20.14px;top:0.00px;width:7.01px;height:6.80px;background:#54575a"></i><i style="left:26.86px;top:0.00px;width:7.01px;height:6.80px;background:#4e5154"></i><i style="left:33.57px;top:0.00px;width:7.01px;height:6.80px;background:#5e6164"></i><i style="left:40.29px;top:0.00px;width:7.01px;height:6.80px;background:#575a5d"></i><i style="left:47.00px;top:0.00px;width:7.01px;height:6.80px;background:#6a6d70"></i><i style="left:53.71px;top:0.00px;width:7.01px;height:6.80px;background:#56595c"></i><i style="left:60.43px;top:0.00px;width:7.01px;height:6.80px;background:#6d7073"></i><i style="left:67.14px;top:0.00px;width:7.01px;height:6.80px;background:#595c5f"></i><i style="left:73.86px;top:0.00px;width:7.01px;height:6.80px;background:#5e6164"></i><i style="left:80.57px;top:0.00px;width:7.01px;height:6.80px;background:#6f7275"></i><i style="left:87.29px;top:0.00px;width:7.01px;height:6.80px;background:#66696c"></i><i style="left:0.00px;top:6.50px;width:7.01px;height:6.80px;background:#626568"></i><i style="left:6.71px;top:6.50px;width:7.01px;height:6.80px;background:#4e5154"></i><i style="left:13.43px;top:6.50px;width:7.01px;height:6.80px;background:#686b6e"></i><i style="left:20.14px;top:6.50px;width:7.01px;height:6.80px;background:#5d6063"></i><i style="left:26.86px;top:6.50px;width:7.01px;height:6.80px;background:#55585b"></i><i style="left:33.57px;top:6.50px;width:7.01px;height:6.80px;background:#54575a"></i><i style="left:40.29px;top:6.50px;width:7.01px;height:6.80px;background:#626568"></i><i style="left:47.00px;top:6.50px;width:7.01px;height:6.80px;background:#626568"></i><i style="left:53.71px;top:6.50px;width:7.01px;height:6.80px;background:#676a6d"></i><i style="left:60.43px;top:6.50px;width:7.01px;height:6.80px;background:#6b6e71"></i><i style="left:67.14px;top:6.50px;width:7.01px;height:6.80px;background:#6b6e71"></i><i style="left:73.86px;top:6.50px;width:7.01px;height:6.80px;background:#616467"></i><i style="left:80.57px;top:6.50px;width:7.01px;height:6.80px;background:#66696c"></i><i style="left:87.29px;top:6.50px;width:7.01px;height:6.80px;background:#626568"></i></div>
<div style="left:2172px;top:101.5px;width:1px;height:23px;background:#2e3032;"></div>
<svg style="left:2028px;top:104.5px;" width="16" height="16" viewBox="0 0 16 16"><path d="M3.3 1.7h6.199999999999998l3.2 3.2v9.400000000000002h-9.399999999999999z" fill="none" stroke="#a4a7a9" stroke-width="1.8" stroke-linejoin="miter"/><path d="M9.5 1.7v3.2h3.2" fill="none" stroke="#a4a7a9" stroke-width="1"/><rect x="1.6" y="6" width="12.8" height="6.8" rx="3.2" fill="#fbe3e6" stroke="#e8566e" stroke-width="1.5"/><text x="8" y="11.6" text-anchor="middle" font-family="Liberation Sans,sans-serif" font-weight="bold" font-size="6" fill="#111" letter-spacing="-.3">M↓</text></svg>
<div class="t" style="left:2048px;top:105.6px;height:16px;line-height:16px;font-size:12.2px;color:#d6d8da;">database.md</div>
<svg style="left:2157.5px;top:110px;" width="7" height="7" viewBox="0 0 7 7"><path d="M.5.5l6 6M6.500.5l-6 6" stroke="#86898b" stroke-width="1.400"/></svg>
<div style="left:2339px;top:101.5px;width:1px;height:23px;background:#2e3032;"></div>
<svg style="left:2215px;top:104.5px;" width="16" height="16" viewBox="0 0 16 16"><path d="M2.6 1.5h6.000000000000001l3.2 3.2v9.7h-9.200000000000001z" fill="none" stroke="#a4a7a9" stroke-width="1.8" stroke-linejoin="miter"/><path d="M8.600000000000001 1.5v3.2h3.2" fill="none" stroke="#a4a7a9" stroke-width="1"/><rect x="1.7" y="6.7" width="12.7" height="6.3" fill="#b9a9fa"/><text x="8.049999999999999" y="11.5" text-anchor="middle" font-family="Liberation Sans,sans-serif" font-weight="bold" font-size="7.3" fill="#1a1030" letter-spacing="0">php</text></svg>
<div class="t" style="left:2234.5px;top:105.6px;height:16px;line-height:16px;font-size:12.2px;color:#d6d8da;">main.php</div>
<svg style="left:2323.5px;top:110px;" width="7" height="7" viewBox="0 0 7 7"><path d="M.5.5l6 6M6.500.5l-6 6" stroke="#86898b" stroke-width="1.400"/></svg>
<div style="left:1526px;top:125px;width:1px;height:22.5px;background:#2e3032;"></div>
<svg style="left:1377px;top:127.75px;" width="16" height="16" viewBox="0 0 16 16"><path d="M2.6 1.5h6.000000000000001l3.2 3.2v9.7h-9.200000000000001z" fill="none" stroke="#a4a7a9" stroke-width="1.8" stroke-linejoin="miter"/><path d="M8.600000000000001 1.5v3.2h3.2" fill="none" stroke="#a4a7a9" stroke-width="1"/><rect x="1.7" y="6.7" width="12.7" height="6.3" fill="#b9a9fa"/><text x="8.049999999999999" y="11.5" text-anchor="middle" font-family="Liberation Sans,sans-serif" font-weight="bold" font-size="7.3" fill="#1a1030" letter-spacing="0">php</text></svg>
<div class="t" style="left:1396px;top:129.45px;height:16px;line-height:16px;font-size:12.2px;color:#d6d8da;">console.php</div>
<svg style="left:1512px;top:133.25px;" width="7" height="7" viewBox="0 0 7 7"><path d="M.5.5l6 6M6.500.5l-6 6" stroke="#86898b" stroke-width="1.400"/></svg>
<div style="left:1712.5px;top:125px;width:1px;height:22.5px;background:#2e3032;"></div>
<svg style="left:1579.5px;top:127.75px;" width="16" height="16" viewBox="0 0 16 16"><path d="M2.6 1.5h6.000000000000001l3.2 3.2v9.7h-9.200000000000001z" fill="none" stroke="#a4a7a9" stroke-width="1.8" stroke-linejoin="miter"/><path d="M8.600000000000001 1.5v3.2h3.2" fill="none" stroke="#a4a7a9" stroke-width="1"/><rect x="1.7" y="6.7" width="12.7" height="6.3" fill="#b9a9fa"/><text x="8.049999999999999" y="11.5" text-anchor="middle" font-family="Liberation Sans,sans-serif" font-weight="bold" font-size="7.3" fill="#1a1030" letter-spacing="0">php</text></svg>
<div class="t" style="left:1598px;top:129.45px;height:16px;line-height:16px;font-size:12.2px;color:#d6d8da;">main.php</div>
<svg style="left:1698px;top:133.25px;" width="7" height="7" viewBox="0 0 7 7"><path d="M.5.5l6 6M6.500.5l-6 6" stroke="#86898b" stroke-width="1.400"/></svg>
<div style="left:1928px;top:125px;width:1px;height:22.5px;background:#2e3032;"></div>
<svg style="left:1764.5px;top:127.75px;" width="16" height="16" viewBox="0 0 16 16"><path d="M3 1.7h6.2l3.2 3.2v9.400000000000002h-9.4z" fill="none" stroke="#a4a7a9" stroke-width="1.8" stroke-linejoin="miter"/><path d="M9.2 1.7v3.2h3.2" fill="none" stroke="#a4a7a9" stroke-width="1"/><rect x="-0.2" y="6.1" width="16.4" height="6" fill="#4aa4de"/><text x="7.999999999999999" y="11.0" text-anchor="middle" font-family="Liberation Sans,sans-serif" font-weight="bold" font-size="6" fill="#fff" letter-spacing="-0.2">JSON</text></svg>
<div class="t" style="left:1784px;top:129.45px;height:16px;line-height:16px;font-size:12.2px;color:#d6d8da;">composer.json</div>
<svg style="left:1913.5px;top:133.25px;" width="7" height="7" viewBox="0 0 7 7"><path d="M.5.5l6 6M6.500.5l-6 6" stroke="#86898b" stroke-width="1.400"/></svg>
<div style="left:2141.5px;top:125px;width:1px;height:22.5px;background:#2e3032;"></div>
<svg style="left:1980.5px;top:127.75px;" width="16" height="16" viewBox="0 0 16 16"><path d="M3.6 5.3h5.300l3.500 3.500v5.800H3.600z" fill="#5fe04a" stroke="#b2b5b7" stroke-width="1.800"/><text x="7.800" y="13.600" text-anchor="middle" font-family="Liberation Sans,sans-serif" font-weight="bold" font-size="8.500" fill="#0a2a06">h</text></svg>
<div class="t" style="left:2000px;top:129.45px;height:16px;line-height:16px;font-size:12.2px;color:#d6d8da;">TableDays.vue</div>
<svg style="left:2126.5px;top:133.25px;" width="7" height="7" viewBox="0 0 7 7"><path d="M.5.5l6 6M6.500.5l-6 6" stroke="#86898b" stroke-width="1.400"/></svg>
<div style="left:2339px;top:125px;width:1px;height:22.5px;background:#2e3032;"></div>
<svg style="left:2191.5px;top:127.75px;" width="16" height="16" viewBox="0 0 16 16"><path d="M3.6 5.3h5.300l3.500 3.500v5.800H3.600z" fill="#5fe04a" stroke="#b2b5b7" stroke-width="1.800"/><text x="7.800" y="13.600" text-anchor="middle" font-family="Liberation Sans,sans-serif" font-weight="bold" font-size="8.500" fill="#0a2a06">h</text></svg>
<div class="t" style="left:2211px;top:129.45px;height:16px;line-height:16px;font-size:12.2px;color:#d6d8da;">Toolbar.vue</div>
<svg style="left:2323.5px;top:133.25px;" width="7" height="7" viewBox="0 0 7 7"><path d="M.5.5l6 6M6.500.5l-6 6" stroke="#86898b" stroke-width="1.400"/></svg>
<svg style="left:1387.11px;top:154px;" width="12" height="14" viewBox="0 0 12 14"><path d="M3 1v12M1 1h4M1 13h4" stroke="#77797b" fill="none"/><path d="M5 9l5-7 2 1.500-5 7z" fill="#77797b"/></svg>
<div class="t" style="left:1413.66px;top:152.5px;height:18px;line-height:18px;font-size:14px;color:#8a8c8e;font-weight:bold;font-family:'Liberation Serif',serif;">B</div>
<div class="t" style="left:1440.49px;top:152.5px;height:18px;line-height:18px;font-size:14px;color:#8a8c8e;font-family:'Liberation Serif',serif;"><i style="position:static;font-style:italic">I</i></div>
<div class="t" style="left:1463.23px;top:152.5px;height:18px;line-height:18px;font-size:14px;color:#8a8c8e;font-weight:bold;font-family:'Liberation Serif',serif;"><s>T</s></div>
<div style="left:1484.31px;top:152px;width:0;height:18px;border-left:1px dotted #5e6163"></div>
<div class="t" style="left:1491.71px;top:154px;height:14px;line-height:14px;font-size:9px;color:#7d7f81;font-family:'Liberation Serif',serif;"><s>abc</s></div>
<svg style="left:1517.25px;top:156.5px;" width="13" height="9" viewBox="0 0 13 9"><ellipse cx="4.500" cy="3.500" rx="3.800" ry="2.500" fill="none" stroke="#77797b" stroke-width="1.300" transform="rotate(25 4.500 3.500)"/><ellipse cx="8.500" cy="5.500" rx="3.800" ry="2.500" fill="none" stroke="#77797b" stroke-width="1.300" transform="rotate(25 8.500 5.500)"/></svg>
<svg style="left:1542.67px;top:154px;" width="12" height="12" viewBox="0 0 12 12"><path d="M2 3h9M2 3l3-2.500M2 3l3 2.500" stroke="#77797b" fill="none"/><text x="2" y="12" font-size="7" fill="#77797b" font-family="Liberation Serif,serif" font-weight="bold">“”</text></svg>
<svg style="left:1568.42px;top:154px;" width="12" height="12" viewBox="0 0 12 12"><path d="M1 3h9M10 3L7 .5M10 3L7 5.500" stroke="#77797b" fill="none"/><text x="2" y="12" font-size="7" fill="#77797b" font-family="Liberation Serif,serif" font-weight="bold">“”</text></svg>
<div style="left:1590.3px;top:152px;width:0;height:18px;border-left:1px dotted #5e6163"></div>
<div class="t" style="left:1596.81px;top:153.5px;height:16px;line-height:16px;font-size:13px;color:#77797b;font-family:'Liberation Serif',serif;">H</div>
<svg style="left:1605.81px;top:154px;" width="8" height="14" viewBox="0 0 8 14"><path d="M0 1.500c2 0 2 2 2 3.500S2 7 3.500 7C2 7 2 8 2 9.500S2 12.500 0 12.500" fill="none" stroke="#77797b"/><path d="M6 12V2M4.500 4L6 2l1.500 2" stroke="#77797b" fill="none"/></svg>
<div class="t" style="left:1621.46px;top:153.5px;height:16px;line-height:16px;font-size:13px;color:#77797b;font-family:'Liberation Serif',serif;">H</div>
<svg style="left:1630.46px;top:154px;" width="8" height="14" viewBox="0 0 8 14"><path d="M0 1.500c2 0 2 2 2 3.500S2 7 3.500 7C2 7 2 8 2 9.500S2 12.500 0 12.500" fill="none" stroke="#77797b"/><path d="M6 2v10M4.500 10L6 12l1.500-2" stroke="#77797b" fill="none"/></svg>
<div class="t" style="left:1650.16px;top:153.5px;height:16px;line-height:16px;font-size:11px;color:#77797b;font-family:'Liberation Serif',serif;">H</div>
<svg style="left:1645.66px;top:154px;" width="18" height="14" viewBox="0 0 18 14"><path d="M4.500 1.500c-1.500 0-1.500 2-1.500 3.500s0 2-1.500 2c1.500 0 1.500 1 1.500 2.500s0 3 1.500 3M12.500 1.500c1.500 0 1.500 2 1.500 3.500s0 2 1.500 2c-1.500 0-1.500 1-1.500 2.500s0 3-1.500 3" fill="none" stroke="#77797b"/><path d="M1.500 13V8M0 10l1.500 2L3 10M16.500 1v5M15 3l1.500-2L18 3" stroke="#77797b" fill="none"/></svg>
<div style="left:1671.36px;top:152px;width:0;height:18px;border-left:1px dotted #5e6163"></div>
<svg style="left:1679.15px;top:154px;" width="14" height="14" viewBox="0 0 14 14"><path d="M1 2.500h9M1 2.500l2.500-2M1 2.500l2.500 2" stroke="#77797b" fill="none"/><path d="M3 6.500h10M5 9.500h8M3 12.500h10" stroke="#77797b" stroke-width="1.400" stroke-dasharray="2 .8"/></svg>
<svg style="left:1703.8px;top:154px;" width="14" height="14" viewBox="0 0 14 14"><path d="M1 2.500h9M1 2.500l2.500-2M1 2.500l2.500 2" stroke="#77797b" fill="none"/><path d="M3 6.500h10M5 9.500h8M3 12.500h10" stroke="#77797b" stroke-width="1.400" stroke-dasharray="2 .8"/></svg>
<svg style="left:1728.95px;top:155.5px;" width="13" height="13" viewBox="0 0 13 13"><rect x="0" y="1.5" width="2" height="2" fill="#77797b"/><path d="M4 2.5h9" stroke="#77797b" stroke-width="1.500"/><rect x="0" y="5.5" width="2" height="2" fill="#77797b"/><path d="M4 6.5h9" stroke="#77797b" stroke-width="1.500"/><rect x="0" y="9.5" width="2" height="2" fill="#77797b"/><path d="M4 10.5h9" stroke="#77797b" stroke-width="1.500"/></svg>
<svg style="left:1754.15px;top:155.5px;" width="13" height="13" viewBox="0 0 13 13"><rect x="0" y="1.5" width="2" height="2" fill="#77797b"/><path d="M4 2.5h9" stroke="#77797b" stroke-width="1.500"/><rect x="0" y="5.5" width="2" height="2" fill="#77797b"/><path d="M4 6.5h9" stroke="#77797b" stroke-width="1.500"/><rect x="0" y="9.5" width="2" height="2" fill="#77797b"/><path d="M4 10.5h9" stroke="#77797b" stroke-width="1.500"/></svg>
<svg style="left:1779.07px;top:155.5px;" width="13" height="13" viewBox="0 0 13 13"><rect x="0" y="1.5" width="2" height="2" fill="#77797b"/><path d="M4 2.5h9" stroke="#77797b" stroke-width="1.500" stroke-dasharray="1.500 1"/><rect x="0" y="5.5" width="2" height="2" fill="#77797b"/><path d="M4 6.5h9" stroke="#77797b" stroke-width="1.500" stroke-dasharray="1.500 1"/><rect x="0" y="9.5" width="2" height="2" fill="#77797b"/><path d="M4 10.5h9" stroke="#77797b" stroke-width="1.500" stroke-dasharray="1.500 1"/></svg>
<svg style="left:1803.72px;top:155.5px;" width="13" height="13" viewBox="0 0 13 13"><path d="M4 2.5h9" stroke="#77797b" stroke-width="1.500" stroke-dasharray="1.500 1"/><path d="M4 6.5h9" stroke="#77797b" stroke-width="1.500" stroke-dasharray="1.500 1"/><path d="M4 10.5h9" stroke="#77797b" stroke-width="1.500" stroke-dasharray="1.500 1"/></svg>
<svg style="left:1828.91px;top:155.5px;" width="13" height="13" viewBox="0 0 13 13"><rect x="0" y="1.5" width="2" height="2" fill="#77797b"/><path d="M4 2.5h9" stroke="#77797b" stroke-width="1.500" stroke-dasharray="1.500 1"/><rect x="0" y="5.5" width="2" height="2" fill="#77797b"/><path d="M4 6.5h9" stroke="#77797b" stroke-width="1.500" stroke-dasharray="1.500 1"/><rect x="0" y="9.5" width="2" height="2" fill="#77797b"/><path d="M4 10.5h9" stroke="#77797b" stroke-width="1.500" stroke-dasharray="1.500 1"/></svg>
<svg style="left:1855.11px;top:155.5px;" width="11" height="11" viewBox="0 0 11 11"><rect x=".7" y="2" width="8.500" height="8.500" fill="none" stroke="#77797b" stroke-width="1.300"/><path d="M2.500 5.500l2.500 3 5-7.500" fill="none" stroke="#77797b" stroke-width="1.400"/></svg>
<div style="left:1877.31px;top:152px;width:0;height:18px;border-left:1px dotted #5e6163"></div>
<svg style="left:1885.05px;top:154.5px;" width="13" height="13" viewBox="0 0 13 13"><rect x=".5" y=".5" width="12" height="12" fill="#55585a" stroke="#77797b"/><path d="M.5 4.500h12M.5 8.500h12M4.500.5v12M8.500.5v12" stroke="#3c3f41" stroke-width="1.200"/></svg>
<svg style="left:1910.25px;top:154.5px;" width="13" height="13" viewBox="0 0 13 13"><rect x=".5" y=".5" width="12" height="12" fill="#55585a" stroke="#77797b"/><path d="M.5 4.500h12M.5 8.500h12M4.500.5v12M8.500.5v12" stroke="#3c3f41" stroke-width="1.200"/></svg>
<svg style="left:1935.17px;top:154.5px;" width="13" height="13" viewBox="0 0 13 13"><rect x=".5" y=".5" width="12" height="12" fill="#55585a" stroke="#77797b"/><path d="M.5 4.500h12M.5 8.500h12M4.500.5v12M8.500.5v12" stroke="#3c3f41" stroke-width="1.200"/></svg>
<svg style="left:1960.37px;top:154.5px;" width="13" height="13" viewBox="0 0 13 13"><rect x=".5" y=".5" width="12" height="12" fill="#55585a" stroke="#77797b"/><path d="M.5 4.500h12M.5 8.500h12M4.500.5v12M8.500.5v12" stroke="#3c3f41" stroke-width="1.200"/></svg>
<svg style="left:1985.56px;top:154.5px;" width="13" height="13" viewBox="0 0 13 13"><rect x=".5" y=".5" width="12" height="12" fill="#55585a" stroke="#77797b"/><path d="M.5 4.500h12M.5 8.500h12M4.500.5v12M8.500.5v12" stroke="#3c3f41" stroke-width="1.200"/></svg>
<svg style="left:1960.07px;top:154.5px;" width="13" height="13" viewBox="0 0 13 13"><rect x=".5" y=".5" width="12" height="12" fill="#55585a" stroke="#77797b"/><path d="M.5 4.500h12M.5 8.500h12M4.500.5v12M8.500.5v12" stroke="#3c3f41" stroke-width="1.200"/></svg>
<svg style="left:1984.93px;top:154.5px;" width="13" height="13" viewBox="0 0 13 13"><rect x=".5" y=".5" width="12" height="12" fill="#55585a" stroke="#77797b"/><path d="M.5 4.500h12M.5 8.500h12M4.500.5v12M8.500.5v12" stroke="#3c3f41" stroke-width="1.200"/></svg>
<svg style="left:2010.34px;top:154.5px;" width="13" height="13" viewBox="0 0 13 13"><rect x=".5" y=".5" width="12" height="12" fill="#55585a" stroke="#77797b"/><path d="M.5 4.500h12M.5 8.500h12M4.500.5v12M8.500.5v12" stroke="#3c3f41" stroke-width="1.200"/></svg>
<div style="left:2032.86px;top:152px;width:0;height:18px;border-left:1px dotted #5e6163"></div>
<svg style="left:2042.56px;top:154.5px;" width="11" height="13" viewBox="0 0 11 13"><path d="M.7.700h6.500l3 3v8.600H.7z" fill="none" stroke="#77797b" stroke-width="1.300"/><path d="M3 6.500h5M3 9h5" stroke="#77797b"/></svg>
<svg style="left:2067.41px;top:154.5px;" width="11" height="13" viewBox="0 0 11 13"><path d="M.7.700h6.500l3 3v8.600H.7z" fill="none" stroke="#77797b" stroke-width="1.300"/><path d="M3 6.500h5M3 9h5" stroke="#77797b"/></svg>
<div style="left:2089.49px;top:152px;width:0;height:18px;border-left:1px dotted #5e6163"></div>
<svg style="left:2096.85px;top:154.5px;" width="14" height="13" viewBox="0 0 14 13"><path d="M1 0v10M13 0v10M1 11.500h12" stroke="#77797b" fill="none"/><text x="7" y="9" text-anchor="middle" font-size="9" fill="#77797b" font-family="Liberation Serif,serif">A</text></svg>
<div style="left:2120.7px;top:152px;width:0;height:18px;border-left:1px dotted #5e6163"></div>
<svg style="left:2128.51px;top:154px;" width="12" height="14" viewBox="0 0 12 14"><path d="M3 .7h5l3 3v7H3z" fill="none" stroke="#77797b" stroke-width="1.200"/><path d="M.7 3.500h6l2 2v7.800H.7z" fill="#3c3f41" stroke="#77797b" stroke-width="1.200"/><path d="M2.500 7l4 4M6.500 7l-4 4" stroke="#77797b"/></svg>
<svg style="left:2174.14px;top:155px;" width="13" height="12" viewBox="0 0 13 12"><rect x=".6" y=".6" width="11.800" height="10.800" fill="none" stroke="#77797b" stroke-width="1.200"/><path d="M2 10l9-8" stroke="#77797b"/></svg>
<svg style="left:2199.55px;top:155px;" width="13" height="12" viewBox="0 0 13 12"><rect x=".6" y=".6" width="11.800" height="10.800" fill="none" stroke="#77797b" stroke-width="1.200"/><ellipse cx="6.500" cy="6" rx="3.800" ry="2.200" fill="none" stroke="#77797b"/><circle cx="6.500" cy="6" r="1" fill="#77797b"/></svg>
<div style="left:2220.69px;top:150px;width:22.5px;height:22px;background:#4c5052;border:1px solid #6a6d6f;border-radius:3px;box-sizing:border-box"></div>
<svg style="left:2223.91px;top:154.5px;" width="14" height="13" viewBox="0 0 14 13"><rect x=".7" y=".7" width="12.600" height="11.600" fill="#3a2a2e" stroke="#c8c8c8" stroke-width="1.300"/><text x="7" y="10.300" text-anchor="middle" font-size="9.500" font-weight="bold" fill="#f0506e" font-family="Liberation Sans,sans-serif">M</text></svg>
<div style="left:2247.2px;top:152px;width:0;height:18px;border-left:1px dotted #5e6163"></div>
<div style="left:2251.07px;top:150px;width:22.5px;height:22px;background:#4c5052;border:1px solid #6a6d6f;border-radius:3px;box-sizing:border-box"></div>
<svg style="left:2255.9px;top:155px;" width="13" height="12" viewBox="0 0 13 12"><rect x=".6" y=".6" width="11.800" height="10.800" fill="none" stroke="#77797b" stroke-width="1.200"/><rect x="2.500" y="4" width="8" height="5.500" fill="none" stroke="#77797b"/><path d="M2.500 2.500h8" stroke="#77797b"/></svg>
<svg style="left:2280.48px;top:155px;" width="13" height="12" viewBox="0 0 13 12"><rect x=".6" y=".6" width="11.800" height="10.800" fill="none" stroke="#77797b" stroke-width="1.200"/><text x="6.500" y="9" text-anchor="middle" font-size="7" fill="#77797b" font-family="Liberation Mono,monospace">{}</text></svg>
<svg style="left:2305.34px;top:155px;" width="13" height="12" viewBox="0 0 13 12"><rect x=".6" y=".6" width="11.800" height="10.800" fill="none" stroke="#77797b" stroke-width="1.200"/><path d="M5 4L3 6l2 2M8 4l2 2-2 2" fill="none" stroke="#77797b"/></svg>
<div style="left:1326px;top:175px;width:1014px;height:1024px;background:#2b2b2b;"></div>
<div style="left:1326px;top:175px;width:53.5px;height:1024px;background:#313335;"></div>
<div style="left:1379.5px;top:175px;width:1px;height:1024px;background:#555759;"></div>
<div style="left:1380.5px;top:175px;width:959.5px;height:15px;background:#323232;"></div>
<div style="left:1889.5px;top:175px;width:1px;height:1024px;background:#414345;"></div>
<svg style="left:2326px;top:178.5px;" width="10" height="10" viewBox="0 0 10 10"><path d="M.5 3l3.500 3.500L9.500.5" fill="none" stroke="#5fb34a" stroke-width="2"/><path d="M.5 9l2-1.500 2 1.500 2-1.500 2 1.500" fill="none" stroke="#5fb34a" stroke-width=".9"/></svg>
<div style="left:2321.5px;top:252px;width:2px;height:2px;background:#777;"></div>
<div style="left:2321.5px;top:266px;width:2px;height:105px;background:#4a7a4e;"></div>
<div style="left:2321.5px;top:385.5px;width:2px;height:30.5px;background:#4a7a4e;"></div>
<div style="left:2321.5px;top:431px;width:2px;height:2px;background:#777;"></div>
<div style="left:2321.5px;top:475.5px;width:2px;height:15.5px;background:#3f6a9a;"></div>
<div style="left:2321.5px;top:521px;width:2px;height:2px;background:#777;"></div>
<div style="left:2321.5px;top:536px;width:2px;height:89px;background:#4a7a4e;"></div>
<div style="left:1371px;top:250px;width:8.5px;height:104.5px;background:#35492f;"></div>
<div style="left:1371px;top:370px;width:8.5px;height:30px;background:#35492f;"></div>
<div style="left:1371px;top:460px;width:8.5px;height:15px;background:#4a4432;"></div>
<div style="left:1371px;top:520px;width:8.5px;height:90px;background:#35492f;"></div>
<svg style="left:1370.5px;top:231px;" width="7" height="8" viewBox="0 0 7 8"><path d="M0 0l7 4-7 4z" fill="#6e7072"/></svg>
<svg style="left:1370.5px;top:411px;" width="7" height="8" viewBox="0 0 7 8"><path d="M0 0l7 4-7 4z" fill="#6e7072"/></svg>
<svg style="left:1370.5px;top:501px;" width="7" height="8" viewBox="0 0 7 8"><path d="M0 0l7 4-7 4z" fill="#6e7072"/></svg>
<div class="ln" style="left:1328px;top:177px;width:16.500px"><div>1</div><div>2</div><div>3</div><div>4</div><div>5</div><div>6</div><div>7</div><div>8</div><div>9</div><div>10</div><div>11</div><div>12</div><div>13</div><div>14</div><div>15</div><div>16</div><div>17</div><div>18</div><div>19</div><div>20</div><div>21</div><div>22</div><div>23</div><div>24</div><div>25</div><div>26</div><div>27</div><div>28</div><div>29</div><div>30</div></div>
<div style="left:1385.4px;top:250px;width:195.328px;height:15px;background:#3e3e3e;"></div>
<div style="left:1580.73px;top:250px;width:174.4px;height:15px;background:#484500;"></div>
<div style="left:1755.13px;top:250px;width:140.915px;height:15px;background:#3e3e3e;"></div>
<div style="left:1385.4px;top:265px;width:195.328px;height:15px;background:#484848;"></div>
<div style="left:1580.73px;top:265px;width:174.4px;height:15px;background:#5a5530;"></div>
<div style="left:1755.13px;top:265px;width:140.915px;height:15px;background:#484848;"></div>
<div style="left:1580.73px;top:280px;width:174.4px;height:15px;background:#484500;"></div>
<div style="left:1580.73px;top:310px;width:174.4px;height:15px;background:#484500;"></div>
<div style="left:1385.4px;top:295px;width:195.328px;height:15px;background:#00373f;"></div>
<div style="left:1580.73px;top:295px;width:174.4px;height:15px;background:#003300;"></div>
<div style="left:1755.13px;top:295px;width:140.915px;height:15px;background:#00373f;"></div>
<div style="left:1385.4px;top:325px;width:195.328px;height:15px;background:#00373f;"></div>
<div style="left:1580.73px;top:325px;width:174.4px;height:15px;background:#003300;"></div>
<div style="left:1755.13px;top:325px;width:140.915px;height:15px;background:#00373f;"></div>
<div style="left:1392.38px;top:385px;width:181.376px;height:15px;background:#3e3e3e;"></div>
<div style="left:1573.75px;top:385px;width:174.4px;height:15px;background:#484500;"></div>
<div style="left:1748.15px;top:385px;width:132.544px;height:15px;background:#3e3e3e;"></div>
<div style="left:1385.4px;top:400px;width:188.352px;height:15px;background:#484848;"></div>
<div style="left:1573.75px;top:400px;width:174.4px;height:15px;background:#5a5530;"></div>
<div style="left:1748.15px;top:400px;width:140.915px;height:15px;background:#484848;"></div>
<div style="left:1573.75px;top:415px;width:174.4px;height:15px;background:#484500;"></div>
<div style="left:1573.75px;top:445px;width:174.4px;height:15px;background:#484500;"></div>
<div style="left:1573.75px;top:475px;width:174.4px;height:15px;background:#484500;"></div>
<div style="left:1392.38px;top:430px;width:181.376px;height:15px;background:#00373f;"></div>
<div style="left:1573.75px;top:430px;width:174.4px;height:15px;background:#003300;"></div>
<div style="left:1748.15px;top:430px;width:8.3712px;height:15px;background:#00373f;"></div>
<div style="left:1392.38px;top:460px;width:181.376px;height:15px;background:#00373f;"></div>
<div style="left:1573.75px;top:460px;width:174.4px;height:15px;background:#003300;"></div>
<div style="left:1748.15px;top:460px;width:8.3712px;height:15px;background:#00373f;"></div>
<div style="left:1385.4px;top:550px;width:118.592px;height:15px;background:#3e3e3e;"></div>
<div style="left:1503.99px;top:550px;width:104.64px;height:15px;background:#484500;"></div>
<div style="left:1608.63px;top:550px;width:8.3712px;height:15px;background:#3e3e3e;"></div>
<div style="left:1385.4px;top:565px;width:118.592px;height:15px;background:#484848;"></div>
<div style="left:1503.99px;top:565px;width:104.64px;height:15px;background:#5a5530;"></div>
<div style="left:1608.63px;top:565px;width:8.3712px;height:15px;background:#484848;"></div>
<div style="left:1503.99px;top:580px;width:104.64px;height:15px;background:#484500;"></div>
<div style="left:1385.4px;top:595px;width:118.592px;height:15px;background:#00373f;"></div>
<div style="left:1503.99px;top:595px;width:104.64px;height:15px;background:#003300;"></div>
<div style="left:1608.63px;top:595px;width:8.3712px;height:15px;background:#00373f;"></div>
<div class="code mdc" style="left:1385.4px;top:176px"><div><h>#</h> <b>Роутинг</b></div><div> </div><div><h>##</h> <b>Backend</b></div><div><h>###</h> <b>Общие пункты меню под админом</b></div><div> </div><div><q>|</q> Описание                 <q>|</q> Сейчас                  <q>|</q> Будет            <q>|</q></div><div><q>|</q><e>--------------------------</e><q>|</q><q class="dl">-------------------------</q><q>|</q><e>------------------</e><q>|</q></div><div><q>|</q> Лиды                     <q>|</q> /                       <q>|</q> leads            <q>|</q></div><div><q>|</q> Офферы                   <q>|</q> /offers                 <q>|</q> offers           <q>|</q></div><div><q>|</q> Ссылки для вебмастера    <q>|</q> /site/<w>webmasrerslinks</w>   <q>|</q> webmaster/links  <q>|</q></div><div><q>|</q> Статистика               <q>|</q> /site/statistic         <q>|</q>                  <q>|</q></div><div> </div><div><h>###</h> <b>Админские пункты меню под админом</b></div><div> </div><div> Описание                 <q>|</q> Сейчас                  <q>|</q> Будет</div><div><e>--------------------------</e><q>|</q><q class="dl">-------------------------</q><q>|</q><e>--------------------</e></div><div> For Admin -&gt; Advertisers <q>|</q> /advertisers/admin      <q>|</q></div><div> For Admin -&gt; Offers      <q>|</q> /offers                 <q>|</q></div><div> For Admin -&gt; Landings    <q>|</q> /landings               <q>|</q></div><div> For Admin -&gt; <w>Cities</w>      <q>|</q> /cities                 <q>|</q></div><div> For Admin -&gt; Webmasters  <q>|</q> /webmasters/admin       <q>|</q></div><div> </div><div><h>##</h> <b>Frontend</b></div><div> </div><div> </div><div><q>|</q> First Header  <q>|</q> Second Header <q>|</q></div><div><q>|</q> <e>-------------</e> <q>|</q> <q class="dl">-------------</q> <q>|</q></div><div><q>|</q> Content Cell  <q>|</q> Content Cell  <q>|</q></div><div><q>|</q> Content Cell  <q>|</q> Content Cell  <q>|</q></div><div> </div></div>
<div style="left:1325.5px;top:1199px;width:1014.5px;height:28px;background:#3c3f41;"></div>
<div style="left:1325.5px;top:1199px;width:1014.5px;height:2.5px;background:#4b4e50;"></div>
<div style="left:1336px;top:1202px;width:68px;height:25px;background:#4e5254;"></div>
<div style="left:1405px;top:1202px;width:165.5px;height:25px;background:#393b3d;"></div>
<div style="left:1336px;top:1202px;width:1px;height:25px;background:#2e3032;"></div>
<div style="left:1404px;top:1202px;width:1px;height:25px;background:#2e3032;"></div>
<div style="left:1491.5px;top:1202px;width:1px;height:25px;background:#2e3032;"></div>
<div style="left:1570.5px;top:1202px;width:1px;height:25px;background:#2e3032;"></div>
<div class="t" style="left:1345px;top:1204.6px;height:16px;line-height:16px;font-size:11.5px;color:#c8cacc;">Markdown</div>
<div class="t" style="left:1414px;top:1204.6px;height:16px;line-height:16px;font-size:11.5px;color:#c8cacc;">HTML Preview</div>
<div class="t" style="left:1501px;top:1204.6px;height:16px;line-height:16px;font-size:11.5px;color:#c8cacc;">Gfm Preview</div>
<div style="left:2340px;top:101px;width:247.5px;height:1126px;background:#3c3f41;"></div>
<div style="left:2340px;top:101px;width:1px;height:1126px;background:#2e3032;"></div>
<div style="left:2341px;top:124.5px;width:246.5px;height:1px;background:#2e3032;"></div>
<div style="left:2341px;top:154px;width:246.5px;height:1px;background:#323436;"></div>
<div class="t" style="left:2345.5px;top:104.8px;height:16px;line-height:16px;font-size:11.4px;color:#8f9294;">Database</div>
<svg style="left:2488.3px;top:106.5px;" width="13" height="13" viewBox="0 0 13 13"><circle cx="6.500" cy="6.500" r="5" fill="none" stroke="#9a9d9f" stroke-width="1.600"/><path d="M6.500 0v4M6.500 13V9M0 6.500h4M13 6.500H9" stroke="#9a9d9f" stroke-width="1.600"/></svg>
<svg style="left:2510.3px;top:106.5px;" width="12" height="13" viewBox="0 0 12 13"><path d="M0 6.500h12" stroke="#9a9d9f" stroke-width="1.300"/><path d="M6 0v4M6 13V9" stroke="#9a9d9f" stroke-width="1.200"/><path d="M3.500 2L6 5l2.500-3M3.500 11L6 8l2.500 3" fill="none" stroke="#9a9d9f"/></svg>
<div style="left:2531px;top:106.5px;width:1.5px;height:12px;background:#77797b;"></div>
<svg style="left:2539.5px;top:107px;" width="12" height="12" viewBox="0 0 12 12"><circle cx="6" cy="6" r="3.300" fill="none" stroke="#9a9d9f" stroke-width="2.400"/><path d="M6 0v12M0 6h12M1.800 1.800l8.400 8.400M10.200 1.800l-8.400 8.400" stroke="#9a9d9f" stroke-width="1.700"/><circle cx="6" cy="6" r="1.500" fill="#3c3f41"/></svg>
<svg style="left:2553.5px;top:111.5px;" width="6" height="4" viewBox="0 0 6 4"><path d="M0 0h6L3 3.500z" fill="#9a9d9f"/></svg>
<svg style="left:2568.3px;top:107px;" width="12" height="12" viewBox="0 0 12 12"><path d="M11 0v12" stroke="#9a9d9f" stroke-width="2"/><path d="M0 4.500h8" stroke="#9a9d9f" stroke-width="1.300"/><path d="M5 1.500l3 3-3 3" fill="none" stroke="#9a9d9f" stroke-width="1.300"/></svg>
<svg style="left:2347.5px;top:133.3px;" width="12" height="12" viewBox="0 0 12 12"><path d="M6 .5v10M1 5.500h10" stroke="#d0d2d4" stroke-width="1.700"/></svg>
<svg style="left:2358px;top:143.8px;" width="5" height="3" viewBox="0 0 5 3"><path d="M0 0h5L2.500 3z" fill="#d0d2d4"/></svg>
<svg style="left:2371.7px;top:131.8px;" width="14" height="15" viewBox="0 0 14 15"><path d="M5 1h5l3 3v8H5z" fill="#3c3f41" stroke="#9da0a2" stroke-width="1.200"/><path d="M1.500 3.500h5l2.500 2.500v8h-7.500z" fill="#3c3f41" stroke="#4a9cd0" stroke-width="1.600"/></svg>
<div style="left:2395.3px;top:130.5px;width:0;height:18px;border-left:1px dotted #5e6163"></div>
<svg style="left:2402px;top:131.3px;" width="16" height="16" viewBox="0 0 16 16"><path d="M12 4A5.300 5.300 0 0 0 2.800 9.300" fill="none" stroke="#3f9ad6" stroke-width="2"/><path d="M4 12a5.300 5.300 0 0 0 9.200-5.300" fill="none" stroke="#3f9ad6" stroke-width="2"/><path d="M9.300 1.300l4.300.9-1.200 4z" fill="#3f9ad6"/><path d="M6.700 14.700l-4.300-.9 1.200-4z" fill="#3f9ad6"/></svg>
<svg style="left:2426.8px;top:131.3px;" width="16" height="16" viewBox="0 0 16 16"><path d="M2 1h10l-1 2H3zM3 4h8l-1 2H4zM4 7h6l-1 2H5z" fill="#4a9cd0"/><path d="M3 15l7-7" stroke="#9da0a2" stroke-width="3"/><path d="M9.500 4.500a3.500 3.500 0 0 1 5 4.500l-2.500-.5-1-2z" fill="#9da0a2"/></svg>
<div style="left:2454px;top:133.5px;width:11.5px;height:11.5px;background:#6a6d6f;"></div>
<div style="left:2476px;top:130.5px;width:0;height:18px;border-left:1px dotted #5e6163"></div>
<svg style="left:2483.9px;top:132.8px;" width="14" height="13" viewBox="0 0 14 13"><rect x=".5" y=".5" width="13" height="12" fill="#5a5d5f" stroke="#77797b"/><path d="M.5 3.500h13M.5 6.500h13M.5 9.500h13M5 .5v12M9.500.5v12" stroke="#3c3f41"/></svg>
<svg style="left:2508.2px;top:133.3px;" width="15" height="12" viewBox="0 0 15 12"><rect x=".5" y=".5" width="14" height="11" fill="#111" stroke="#d0d0d0"/><text x="8" y="9" text-anchor="middle" font-size="5.500" font-weight="bold" fill="#fff" font-family="Liberation Sans,sans-serif">QL</text></svg>
<div style="left:2341px;top:174px;width:246.5px;height:18.5px;background:#0d293e;"></div>
<svg style="left:2343px;top:159.5px;" width="8" height="10" viewBox="0 0 8 10"><path d="M0 0l8 5-8 5z" fill="#a8abad"/></svg>
<svg style="left:2362.9px;top:157.5px;" width="14" height="14" viewBox="0 0 16 16"><rect x="0.5" y="0.5" width="15" height="15" fill="#d6e6ee" stroke="#4a9ac8" stroke-width="1.2"/><path d="M2.500 3c3.500 0 4 2 5 5s3 4 6 5.500M5 3.500c1 3 3 3 3 6M11 12.500l2.500 2" fill="none" stroke="#2878a8" stroke-width="1.200"/></svg>
<div class="t" style="left:2383.5px;top:156.5px;height:16px;line-height:16px;font-size:12.4px;color:#d4d6d8;">MySQL –</div>
<div class="bl" style="left:2435px;top:158.5px;width:91px;height:12px"><i style="left:0.00px;top:0.00px;width:6.37px;height:6.30px;background:#6b6e71"></i><i style="left:6.07px;top:0.00px;width:6.37px;height:6.30px;background:#4f5255"></i><i style="left:12.13px;top:0.00px;width:6.37px;height:6.30px;background:#525558"></i><i style="left:18.20px;top:0.00px;width:6.37px;height:6.30px;background:#6c6f72"></i><i style="left:24.27px;top:0.00px;width:6.37px;height:6.30px;background:#64676a"></i><i style="left:30.33px;top:0.00px;width:6.37px;height:6.30px;background:#515457"></i><i style="left:36.40px;top:0.00px;width:6.37px;height:6.30px;background:#55585b"></i><i style="left:42.47px;top:0.00px;width:6.37px;height:6.30px;background:#696c6f"></i><i style="left:48.53px;top:0.00px;width:6.37px;height:6.30px;background:#5c5f62"></i><i style="left:54.60px;top:0.00px;width:6.37px;height:6.30px;background:#4c4f52"></i><i style="left:60.67px;top:0.00px;width:6.37px;height:6.30px;background:#676a6d"></i><i style="left:66.73px;top:0.00px;width:6.37px;height:6.30px;background:#525558"></i><i style="left:72.80px;top:0.00px;width:6.37px;height:6.30px;background:#5e6164"></i><i style="left:78.87px;top:0.00px;width:6.37px;height:6.30px;background:#606366"></i><i style="left:84.93px;top:0.00px;width:6.37px;height:6.30px;background:#5b5e61"></i><i style="left:0.00px;top:6.00px;width:6.37px;height:6.30px;background:#5a5d60"></i><i style="left:6.07px;top:6.00px;width:6.37px;height:6.30px;background:#5a5d60"></i><i style="left:12.13px;top:6.00px;width:6.37px;height:6.30px;background:#505356"></i><i style="left:18.20px;top:6.00px;width:6.37px;height:6.30px;background:#6c6f72"></i><i style="left:24.27px;top:6.00px;width:6.37px;height:6.30px;background:#575a5d"></i><i style="left:30.33px;top:6.00px;width:6.37px;height:6.30px;background:#585b5e"></i><i style="left:36.40px;top:6.00px;width:6.37px;height:6.30px;background:#626568"></i><i style="left:42.47px;top:6.00px;width:6.37px;height:6.30px;background:#6d7073"></i><i style="left:48.53px;top:6.00px;width:6.37px;height:6.30px;background:#54575a"></i><i style="left:54.60px;top:6.00px;width:6.37px;height:6.30px;background:#606366"></i><i style="left:60.67px;top:6.00px;width:6.37px;height:6.30px;background:#6b6e71"></i><i style="left:66.73px;top:6.00px;width:6.37px;height:6.30px;background:#575a5d"></i><i style="left:72.80px;top:6.00px;width:6.37px;height:6.30px;background:#626568"></i><i style="left:78.87px;top:6.00px;width:6.37px;height:6.30px;background:#575a5d"></i><i style="left:84.93px;top:6.00px;width:6.37px;height:6.30px;background:#525558"></i></div>
<div class="t" style="left:2526px;top:156.5px;width:61px;height:16px;line-height:16px;font-size:13px;color:#d4d6d8;overflow:hidden">@192.168</div>
<svg style="left:2362.9px;top:176.3px;" width="14" height="14" viewBox="0 0 16 16"><rect x="0.5" y="0.5" width="15" height="15" fill="#d6e6ee" stroke="#4a9ac8" stroke-width="1.2"/><path d="M2.500 3c3.500 0 4 2 5 5s3 4 6 5.500M5 3.500c1 3 3 3 3 6M11 12.500l2.500 2" fill="none" stroke="#2878a8" stroke-width="1.200"/></svg>
<div class="t" style="left:2383.5px;top:175.3px;height:16px;line-height:16px;font-size:12.4px;color:#d4d6d8;">MySQL –</div>
<div class="bl" style="left:2435px;top:177.3px;width:91px;height:12px"><i style="left:0.00px;top:0.00px;width:6.37px;height:6.30px;background:#2c4357"></i><i style="left:6.07px;top:0.00px;width:6.37px;height:6.30px;background:#2a4054"></i><i style="left:12.13px;top:0.00px;width:6.37px;height:6.30px;background:#3b5367"></i><i style="left:18.20px;top:0.00px;width:6.37px;height:6.30px;background:#364e62"></i><i style="left:24.27px;top:0.00px;width:6.37px;height:6.30px;background:#385064"></i><i style="left:30.33px;top:0.00px;width:6.37px;height:6.30px;background:#354d61"></i><i style="left:36.40px;top:0.00px;width:6.37px;height:6.30px;background:#31485c"></i><i style="left:42.47px;top:0.00px;width:6.37px;height:6.30px;background:#385064"></i><i style="left:48.53px;top:0.00px;width:6.37px;height:6.30px;background:#354d61"></i><i style="left:54.60px;top:0.00px;width:6.37px;height:6.30px;background:#3a5266"></i><i style="left:60.67px;top:0.00px;width:6.37px;height:6.30px;background:#385064"></i><i style="left:66.73px;top:0.00px;width:6.37px;height:6.30px;background:#3d5569"></i><i style="left:72.80px;top:0.00px;width:6.37px;height:6.30px;background:#334b5f"></i><i style="left:78.87px;top:0.00px;width:6.37px;height:6.30px;background:#2b4256"></i><i style="left:84.93px;top:0.00px;width:6.37px;height:6.30px;background:#293f53"></i><i style="left:0.00px;top:6.00px;width:6.37px;height:6.30px;background:#2d4357"></i><i style="left:6.07px;top:6.00px;width:6.37px;height:6.30px;background:#334a5e"></i><i style="left:12.13px;top:6.00px;width:6.37px;height:6.30px;background:#374f63"></i><i style="left:18.20px;top:6.00px;width:6.37px;height:6.30px;background:#2d4458"></i><i style="left:24.27px;top:6.00px;width:6.37px;height:6.30px;background:#374f63"></i><i style="left:30.33px;top:6.00px;width:6.37px;height:6.30px;background:#2d4357"></i><i style="left:36.40px;top:6.00px;width:6.37px;height:6.30px;background:#374f63"></i><i style="left:42.47px;top:6.00px;width:6.37px;height:6.30px;background:#3c5468"></i><i style="left:48.53px;top:6.00px;width:6.37px;height:6.30px;background:#31485c"></i><i style="left:54.60px;top:6.00px;width:6.37px;height:6.30px;background:#385064"></i><i style="left:60.67px;top:6.00px;width:6.37px;height:6.30px;background:#395165"></i><i style="left:66.73px;top:6.00px;width:6.37px;height:6.30px;background:#30475b"></i><i style="left:72.80px;top:6.00px;width:6.37px;height:6.30px;background:#354c60"></i><i style="left:78.87px;top:6.00px;width:6.37px;height:6.30px;background:#2b4155"></i><i style="left:84.93px;top:6.00px;width:6.37px;height:6.30px;background:#364e62"></i></div>
<div class="t" style="left:2526px;top:175.3px;width:61px;height:16px;line-height:16px;font-size:12px;color:#d4d6d8;overflow:hidden">@localhost</div>
<div style="left:2587.5px;top:101px;width:20.5px;height:1295px;background:#3c3f41;"></div>
<div style="left:2587.5px;top:101px;width:1px;height:1295px;background:#323436;"></div>
<div style="left:2588.5px;top:350px;width:19.5px;height:87px;background:#2c2e2f;"></div>
<svg style="left:2591.5px;top:114.5px;" width="13" height="13" viewBox="0 0 13 13"><rect x="0" y="1" width="7" height="7" fill="#4a9cd0"/><circle cx="8" cy="8" r="5" fill="#e8a33d"/><path d="M8 8V3a5 5 0 0 0-5 5z" fill="#38b048"/></svg>
<div class="t" style="left:2597.2px;top:131px;height:16px;line-height:16px;font-size:12px;color:#bbbbbb;transform-origin:0 0;transform:rotate(90deg) translate(0,-8px)"><u>9</u>: Version Control</div>
<svg style="left:2592.5px;top:253.5px;" width="11" height="13" viewBox="0 0 11 13"><path d="M1 0v10M4 0v10M7 0v10M10 0v10" stroke="#9da0a2" stroke-width="1.500"/><rect x="0" y="10" width="11" height="3" fill="#6a8a5a"/></svg>
<div class="t" style="left:2597.2px;top:271px;height:16px;line-height:16px;font-size:12px;color:#bbbbbb;transform-origin:0 0;transform:rotate(90deg) translate(0,-8px)">Remote Host</div>
<svg style="left:2591.5px;top:360.5px;" width="13" height="13" viewBox="0 0 13 13"><path d="M0 0h7v2H2v7H0z" fill="#4a9cd0"/><rect x="3.500" y="3.500" width="9" height="9" fill="#c8cacc"/><path d="M3.500 6.500h9M3.500 9.500h9M6.500 3.500v9M9.500 3.500v9" stroke="#3c3f41" stroke-width=".9"/></svg>
<div class="t" style="left:2597.2px;top:377.5px;height:16px;line-height:16px;font-size:12px;color:#f0f0f0;transform-origin:0 0;transform:rotate(90deg) translate(0,-8px)">Database</div>
<div class="t" style="left:2597.2px;top:446.5px;height:16px;line-height:16px;font-size:12px;color:#bbbbbb;transform-origin:0 0;transform:rotate(90deg) translate(0,-8px)">GfmBrowser</div>
<div style="left:68.5px;top:1227px;width:2519px;height:23px;background:#3c3f41;"></div>
<div style="left:68.5px;top:1227px;width:2519px;height:1px;background:#323436;"></div>
<div class="t" style="left:74px;top:1231px;height:16px;line-height:16px;font-size:12.3px;color:#8f9294;">Terminal</div>
<svg style="left:2538.5px;top:1233px;" width="12" height="12" viewBox="0 0 12 12"><circle cx="6" cy="6" r="3.300" fill="none" stroke="#9a9d9f" stroke-width="2.400"/><path d="M6 0v12M0 6h12M1.800 1.800l8.400 8.400M10.200 1.800l-8.400 8.400" stroke="#9a9d9f" stroke-width="1.700"/><circle cx="6" cy="6" r="1.500" fill="#3c3f41"/></svg>
<svg style="left:2552.5px;top:1237.5px;" width="6" height="4" viewBox="0 0 6 4"><path d="M0 0h6L3 3.500z" fill="#9a9d9f"/></svg>
<svg style="left:2568.3px;top:1232.5px;" width="12" height="13" viewBox="0 0 12 13"><path d="M6 0v8M3 5l3 3 3-3" stroke="#9a9d9f" stroke-width="1.300" fill="none"/><rect x=".5" y="10" width="11" height="2.500" fill="none" stroke="#9a9d9f"/></svg>
<div style="left:68.5px;top:1250px;width:29.5px;height:145.5px;background:#3c3f41;"></div>
<div style="left:98px;top:1250px;width:2474.5px;height:145.5px;background:#2b2b2b;"></div>
<div style="left:68.5px;top:1249.5px;width:2519px;height:1px;background:#2e3032;"></div>
<div style="left:2572.5px;top:1250px;width:15px;height:145.5px;background:#3a3c3e;"></div>
<svg style="left:76.2px;top:1258px;" width="13" height="13" viewBox="0 0 13 13"><path d="M6.500 0v13M0 6.500h13" stroke="#38b048" stroke-width="1.800"/></svg>
<svg style="left:76.7px;top:1284.5px;" width="12" height="12" viewBox="0 0 12 12"><path d="M1 1l10 10M11 1L1 11" stroke="#e05a5a" stroke-width="2"/></svg>
<div class="code" style="left:99px;top:1254px;color:#d0d0d0">petja@MacBook <span style="color:#a8c023">~/P/</span></div>
<div class="bl" style="left:224.568px;top:1255px;width:97.664px;height:11px"><i style="left:0.00px;top:0.00px;width:5.73px;height:5.80px;background:#707b22"></i><i style="left:5.43px;top:0.00px;width:5.73px;height:5.80px;background:#5a6420"></i><i style="left:10.85px;top:0.00px;width:5.73px;height:5.80px;background:#7c8a28"></i><i style="left:16.28px;top:0.00px;width:5.73px;height:5.80px;background:#6f7b22"></i><i style="left:21.70px;top:0.00px;width:5.73px;height:5.80px;background:#606a20"></i><i style="left:27.13px;top:0.00px;width:5.73px;height:5.80px;background:#839229"></i><i style="left:32.55px;top:0.00px;width:5.73px;height:5.80px;background:#839229"></i><i style="left:37.98px;top:0.00px;width:5.73px;height:5.80px;background:#879729"></i><i style="left:43.41px;top:0.00px;width:5.73px;height:5.80px;background:#7b8928"></i><i style="left:48.83px;top:0.00px;width:5.73px;height:5.80px;background:#576120"></i><i style="left:54.26px;top:0.00px;width:5.73px;height:5.80px;background:#606a20"></i><i style="left:59.68px;top:0.00px;width:5.73px;height:5.80px;background:#555f20"></i><i style="left:65.11px;top:0.00px;width:5.73px;height:5.80px;background:#7a8828"></i><i style="left:70.54px;top:0.00px;width:5.73px;height:5.80px;background:#4b5320"></i><i style="left:75.96px;top:0.00px;width:5.73px;height:5.80px;background:#788627"></i><i style="left:81.39px;top:0.00px;width:5.73px;height:5.80px;background:#555f20"></i><i style="left:86.81px;top:0.00px;width:5.73px;height:5.80px;background:#586220"></i><i style="left:92.24px;top:0.00px;width:5.73px;height:5.80px;background:#727e24"></i><i style="left:0.00px;top:5.50px;width:5.73px;height:5.80px;background:#717c23"></i><i style="left:5.43px;top:5.50px;width:5.73px;height:5.80px;background:#6e7921"></i><i style="left:10.85px;top:5.50px;width:5.73px;height:5.80px;background:#758225"></i><i style="left:16.28px;top:5.50px;width:5.73px;height:5.80px;background:#737f24"></i><i style="left:21.70px;top:5.50px;width:5.73px;height:5.80px;background:#545d20"></i><i style="left:27.13px;top:5.50px;width:5.73px;height:5.80px;background:#646f21"></i><i style="left:32.55px;top:5.50px;width:5.73px;height:5.80px;background:#545d20"></i><i style="left:37.98px;top:5.50px;width:5.73px;height:5.80px;background:#727e24"></i><i style="left:43.41px;top:5.50px;width:5.73px;height:5.80px;background:#667021"></i><i style="left:48.83px;top:5.50px;width:5.73px;height:5.80px;background:#555f20"></i><i style="left:54.26px;top:5.50px;width:5.73px;height:5.80px;background:#586220"></i><i style="left:59.68px;top:5.50px;width:5.73px;height:5.80px;background:#798627"></i><i style="left:65.11px;top:5.50px;width:5.73px;height:5.80px;background:#606a20"></i><i style="left:70.54px;top:5.50px;width:5.73px;height:5.80px;background:#758225"></i><i style="left:75.96px;top:5.50px;width:5.73px;height:5.80px;background:#859529"></i><i style="left:81.39px;top:5.50px;width:5.73px;height:5.80px;background:#5a6420"></i><i style="left:86.81px;top:5.50px;width:5.73px;height:5.80px;background:#768325"></i><i style="left:92.24px;top:5.50px;width:5.73px;height:5.80px;background:#606a20"></i></div>
<div class="code" style="left:322.232px;top:1254px;color:#d0d0d0">&gt;</div>
<div style="left:337.2px;top:1251px;width:6.8px;height:17px;border:1px solid #d0d0d0;box-sizing:border-box"></div>
<div style="left:48px;top:1395.5px;width:2560px;height:23px;background:#3c3f41;"></div>
<div style="left:48px;top:1395.5px;width:2560px;height:1px;background:#323436;"></div>
<div style="left:68.5px;top:1396.5px;width:84.5px;height:22px;background:#2c2e2f;"></div>
<svg style="left:79px;top:1401.5px;" width="13" height="12" viewBox="0 0 13 12"><rect x=".5" y=".5" width="12" height="11" fill="#1a1a1a" stroke="#c8c8c8"/><rect x=".5" y=".5" width="12" height="2.500" fill="#c8c8c8"/><path d="M2.500 5.500l2 1.800-2 1.800M6 9.500h3.500" stroke="#fff" stroke-width="1" fill="none"/></svg>
<div class="t" style="left:96px;top:1398.8px;height:16px;line-height:16px;font-size:12px;color:#f4f4f4;font-weight:bold;letter-spacing:-.15px;">Terminal</div>
<svg style="left:163.5px;top:1400.5px;" width="14" height="14" viewBox="0 0 14 14"><circle cx="8.500" cy="7" r="3.500" fill="#e8a860"/><path d="M4 14c0-3 2-4 4.500-4s4.500 1 4.500 4z" fill="#4a9cd0"/><path d="M5 6c0-3 7-3 7 0z" fill="#8a6a40"/><ellipse cx="3.500" cy="3" rx="3.300" ry="2.500" fill="#e8e8e8"/><path d="M2 2.500h3M2 3.800h2" stroke="#555" stroke-width=".7"/></svg>
<div class="t" style="left:181px;top:1398.8px;height:16px;line-height:16px;font-size:12px;color:#c4c6c8;"><u>6</u>: TODO</div>
<svg style="left:248.2px;top:1401px;" width="13" height="13" viewBox="0 0 13 13"><circle cx="4" cy="4" r="3" fill="#5060e0"/><circle cx="9.500" cy="4" r="3" fill="#e04040"/><circle cx="6.500" cy="9.500" r="3" fill="#40b040"/><path d="M7 7l-4 5M7 7l4-4" stroke="#222" stroke-width="1"/></svg>
<div class="t" style="left:265.7px;top:1398.8px;height:16px;line-height:16px;font-size:12px;color:#c4c6c8;">SvgViewer</div>
<div class="t" style="left:341.3px;top:1398.8px;height:16px;line-height:16px;font-size:12px;color:#c4c6c8;">Regex Tester</div>
<svg style="left:2504px;top:1400.5px;" width="15" height="14" viewBox="0 0 15 14"><path d="M7.500 1a6.200 5.500 0 1 0 3 10.300l3 1.500-1-2.800A5.500 5.500 0 0 0 7.500 1z" fill="none" stroke="#a8abad" stroke-width="1.100"/></svg>
<div class="t" style="left:2524.3px;top:1398.8px;height:16px;line-height:16px;font-size:11.6px;color:#d0d2d4;">Event Log</div>
<div style="left:48px;top:1418.5px;width:2560px;height:21px;background:#3c3f41;"></div>
<div style="left:48px;top:1418.5px;width:2560px;height:1px;background:#45484a;"></div>
<svg style="left:52.7px;top:1422px;" width="14" height="14" viewBox="0 0 14 14"><rect x=".5" y=".5" width="13" height="10" fill="#6a6d6f" stroke="#b0b2b4"/><path d="M0 13.200h14" stroke="#b0b2b4" stroke-width="1.200"/></svg>
<div class="t" style="left:2359.5px;top:1421px;height:16px;line-height:16px;font-size:11.5px;color:#c4c6c8;">27:31</div>
<div class="t" style="left:2401px;top:1421px;height:16px;line-height:16px;font-size:11.5px;color:#c4c6c8;">LF</div>
<div class="t" style="left:2430.5px;top:1421px;height:16px;line-height:16px;font-size:11.5px;color:#c4c6c8;">UTF-8</div>
<div class="t" style="left:2480px;top:1421px;height:16px;line-height:16px;font-size:11.5px;color:#c4c6c8;">Git: master</div>
<svg style="left:2414.5px;top:1424.5px;" width="5" height="9" viewBox="0 0 5 9"><path d="M0 3.500L2.500 0 5 3.500zM0 5.500L2.500 9 5 5.500z" fill="#c4c6c8"/></svg>
<svg style="left:2465px;top:1424.5px;" width="5" height="9" viewBox="0 0 5 9"><path d="M0 3.500L2.500 0 5 3.500zM0 5.500L2.500 9 5 5.500z" fill="#c4c6c8"/></svg>
<svg style="left:2540.5px;top:1424.5px;" width="5" height="9" viewBox="0 0 5 9"><path d="M0 3.500L2.500 0 5 3.500zM0 5.500L2.500 9 5 5.500z" fill="#c4c6c8"/></svg>
<svg style="left:2564.5px;top:1424.5px;" width="10" height="10" viewBox="0 0 10 10"><rect x="3" y="4.500" width="6.500" height="5" fill="#c4c6c8"/><path d="M1 5V3a2 2 0 0 1 4 0v2" fill="none" stroke="#c4c6c8" stroke-width="1.200"/><rect x="5.500" y="6" width="1.500" height="2" fill="#3c3f41"/></svg>
<svg style="left:2587.2px;top:1421px;" width="13" height="15" viewBox="0 0 13 15"><circle cx="6.500" cy="7" r="4.500" fill="none" stroke="#9da0a2"/><path d="M2 5c1-5 8-5 9 0z" fill="none" stroke="#9da0a2"/><path d="M0 5.500h13" stroke="#9da0a2"/><circle cx="4.800" cy="7.500" r=".8" fill="#9da0a2"/><circle cx="8.200" cy="7.500" r=".8" fill="#9da0a2"/><path d="M4 10c1-1 4-1 5 0M3 14c0-2 7-2 7 0" stroke="#9da0a2" fill="none"/></svg>
<div style="left:48px;top:100.8px;width:2560px;height:1.2px;background:#2a2c2d;"></div></div></div></body></html>
